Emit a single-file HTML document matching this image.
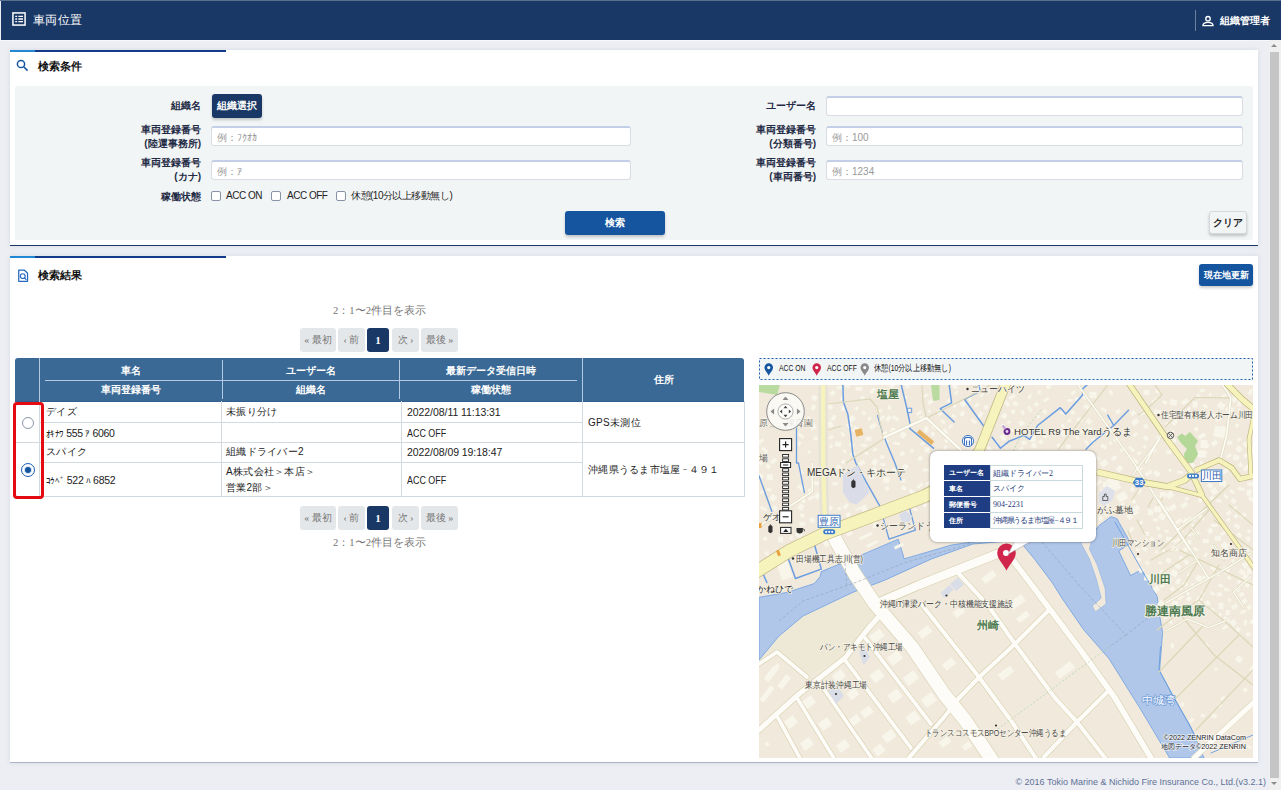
<!DOCTYPE html>
<html lang="ja">
<head>
<meta charset="utf-8">
<title>車両位置</title>
<style>
*{box-sizing:border-box;margin:0;padding:0}
html,body{width:1281px;height:790px;overflow:hidden}
body{background:#eceef3;font-family:"Liberation Sans",sans-serif;font-size:11px;color:#222;position:relative}
.abs{position:absolute}
#hdr{position:absolute;left:1px;top:1px;width:1280px;height:39px;background:#1a3865}
#hdrtop{position:absolute;left:0;top:0;width:1281px;height:1px;background:#5b6f8f}
#hdr .ttl{position:absolute;left:32px;top:11px;color:#fff;font-size:12px;letter-spacing:.35px;line-height:17px;white-space:nowrap}
#hdr .div{position:absolute;left:1194px;top:9px;width:1px;height:21px;background:#6e809c}
#hdr .usr{position:absolute;left:1219px;top:13px;color:#fff;font-size:10px;font-weight:bold;line-height:13px;white-space:nowrap}
.panel{position:absolute;left:10px;width:1248px;background:#fff;box-shadow:0 0 5px rgba(70,90,110,.13)}
.panel .tb1{position:absolute;left:0;top:0;width:25px;height:2px;background:#2288d4}
.panel .tb2{position:absolute;left:25px;top:0;width:191px;height:2px;background:#143a8a}
.ptitle{position:absolute;left:28px;font-size:11px;font-weight:bold;color:#111;line-height:14px;white-space:nowrap}
#p1{top:50px;height:196px;border-bottom:1px solid #1a3865}
#p2{top:256px;height:507px;border-bottom:1px solid #a9b6c8}
#gray{position:absolute;left:5px;top:36px;width:1238px;height:154px;background:#f2f5f5;border-radius:2px}
.lbl{position:absolute;font-size:10px;font-weight:bold;color:#1f2b45;text-align:right;line-height:14px;white-space:nowrap}
.inp{position:absolute;height:20px;background:#fff;border:1px solid #d9dde3;border-top:2px solid #c3cfe6;border-radius:3px;font-size:10px;color:#9a9a9a;line-height:20px;padding-left:5px;white-space:nowrap}
.btn{position:absolute;color:#fff;font-weight:bold;font-size:10px;text-align:center;border-radius:3px;box-shadow:0 2px 3px rgba(0,0,0,.2);white-space:nowrap}
.cb{position:absolute;width:10px;height:10px;border:1px solid #8a93a6;border-radius:2px;background:#fff}
.cbl{position:absolute;font-size:10px;color:#222;line-height:12px;white-space:nowrap;letter-spacing:-.5px}

.pg{position:absolute;height:24px;line-height:24px;background:#e4e7ea;border-radius:3px;color:#777;font-family:"Liberation Serif",serif;font-size:10px;text-align:center;white-space:nowrap}
.pg.on{background:#1a3865;color:#fff;font-weight:bold;font-size:11px}
.pinfo{position:absolute;left:5px;width:729px;text-align:center;font-family:"Liberation Serif",serif;font-size:10.6px;color:#777;line-height:12px;white-space:nowrap}
#th{position:absolute;left:5px;top:102px;width:729px;height:44px;background:#3a6995;border-bottom:1px solid #2f5f8e;border-radius:3px 3px 0 0}
#th div.t{position:absolute;color:#fff;font-weight:bold;font-size:10px;line-height:12px;text-align:center;white-space:nowrap}
#th i{position:absolute;background:#b4cae4;display:block}
#tb{position:absolute;left:5px;top:145px;width:730px;height:96px}
#tb i{position:absolute;background:#d3dadf;display:block}
#tb div{position:absolute;font-size:10px;letter-spacing:.3px;line-height:14px;color:#222;white-space:nowrap}
#tb div.k{letter-spacing:-.3px;font-size:10.5px}
#tb .hk{font-size:8.5px;letter-spacing:-.6px}
#tb div.a{letter-spacing:0;font-size:10.5px;transform:scaleX(.85);transform-origin:0 50%}
#tb div.d{letter-spacing:-.06px;font-size:10.5px}
#red{position:absolute;left:2.500px;top:145.500px;width:31px;height:97px;border:3px solid #e40a12;border-radius:4px}
.radio{position:absolute;width:12px;height:12px;border-radius:50%;border:1px solid #8d96a8;background:#fff}
#legend{position:absolute;left:749px;top:102px;width:494px;height:22px;background:#f2f5f5}
#legend span{position:absolute;top:5px;font-size:8.5px;line-height:10px;color:#111;white-space:nowrap;transform:scaleX(.8);transform-origin:0 0}
#map{position:absolute;left:749px;top:129px;width:494px;height:373px;background:#f0e9dc;overflow:hidden}
#foot{position:absolute;right:15px;top:776px;font-size:9px;line-height:12px;color:#5f7196;white-space:nowrap}
#strack{position:absolute;left:1269px;top:40px;width:12px;height:750px;background:#f0f0f0}
#sbar{position:absolute;left:1270px;top:52px;width:9px;height:726px;background:#c5c5c5}

#pop{position:absolute;left:171px;top:66px;width:166px;height:91px;background:#fff;border-radius:7px;box-shadow:0 0 3px rgba(0,0,0,.45)}
#pop .h{position:absolute;left:14px;width:46px;height:15px;background:#1e3d82;color:#fff;font-weight:bold;font-size:7.4px;line-height:15px;padding-left:5px;white-space:nowrap}
#pop .v{position:absolute;left:60px;width:93px;height:16px;border:1px solid #c9dadd;background:#fff;color:#1f3a7a;font-size:8px;line-height:15px;padding-left:2px;white-space:nowrap;font-family:"Liberation Serif",serif}
</style>
</head>
<body>
<div id="hdrtop"></div>
<div class="abs" style="left:0;top:40px;width:1269px;height:1px;background:#f7f8fb"></div>
<div id="hdr">
  <svg class="abs" style="left:11px;top:11px" width="14" height="14" viewBox="0 0 15 15"><rect x="1" y="1" width="13" height="13" fill="none" stroke="#fff" stroke-width="1.6"/><path d="M3.5 4.7h2M3.5 7.5h2M3.5 10.3h2M6.8 4.7h5M6.8 7.5h5M6.8 10.3h5" stroke="#fff" stroke-width="1.5"/></svg>
  <div class="ttl">車両位置</div>
  <div class="div"></div>
  <svg class="abs" style="left:1201px;top:14px" width="12" height="12" viewBox="0 0 12 12"><circle cx="6" cy="3.7" r="2.2" fill="none" stroke="#fff" stroke-width="1.4"/><path d="M1 10.6c0-2.2 2.6-3.2 5-3.2s5 1 5 3.2z" fill="none" stroke="#fff" stroke-width="1.4"/></svg>
  <div class="usr">組織管理者</div>
</div>

<!-- search condition panel -->
<div class="panel" id="p1">
  <div class="tb1"></div><div class="tb2"></div>
  <svg class="abs" style="left:6px;top:9px" width="13" height="13" viewBox="0 0 13 13"><circle cx="5" cy="5" r="3.6" fill="none" stroke="#1555a0" stroke-width="1.5"/><path d="M7.7 7.7L11.6 11.6" stroke="#1555a0" stroke-width="1.6"/></svg>
  <div class="ptitle" style="top:9px">検索条件</div>
  <div id="gray"></div>
  <div class="lbl" style="right:1057px;top:49px">組織名</div>
  <div class="btn" style="left:202px;top:44px;width:50px;height:24px;line-height:24px;background:#1a3865">組織選択</div>
  <div class="lbl" style="right:1057px;top:73px">車両登録番号<br>(陸運事務所)</div>
  <div class="inp" style="left:201px;top:76px;width:420px">例：ﾌｸｵｶ</div>
  <div class="lbl" style="right:1057px;top:106px">車両登録番号<br>(カナ)</div>
  <div class="inp" style="left:201px;top:110px;width:420px">例：ｱ</div>
  <div class="lbl" style="right:1057px;top:140px">稼働状態</div>
  <div class="cb" style="left:201px;top:141px"></div><div class="cbl" style="left:216px;top:140px">ACC ON</div>
  <div class="cb" style="left:261px;top:141px"></div><div class="cbl" style="left:277px;top:140px">ACC OFF</div>
  <div class="cb" style="left:326px;top:141px"></div><div class="cbl" style="left:341px;top:140px">休憩(10分以上移動無し)</div>
  <div class="lbl" style="right:442px;top:49px">ユーザー名</div>
  <div class="inp" style="left:816px;top:46px;width:417px"></div>
  <div class="lbl" style="right:442px;top:73px">車両登録番号<br>(分類番号)</div>
  <div class="inp" style="left:816px;top:76px;width:417px">例：100</div>
  <div class="lbl" style="right:442px;top:106px">車両登録番号<br>(車両番号)</div>
  <div class="inp" style="left:816px;top:110px;width:417px">例：1234</div>
  <div class="btn" style="left:555px;top:161px;width:100px;height:24px;line-height:24px;background:#1555a0">検索</div>
  <div class="btn" style="left:1199px;top:161px;width:38px;height:23px;line-height:21px;background:#f2f5f5;color:#222;border:1px solid #d5d9de">クリア</div>
</div>

<!-- search results panel -->
<div class="panel" id="p2">
  <div class="tb1"></div><div class="tb2"></div>
  <svg class="abs" style="left:7px;top:12.500px" width="11.500" height="13.500" viewBox="0 0 12 14"><path d="M1.800 1.200h6L11 4.400v8.400H1.800z" fill="none" stroke="#2468c0" stroke-width="1.300" stroke-linejoin="round"/><circle cx="6" cy="7.400" r="2.500" fill="none" stroke="#2468c0" stroke-width="1.200"/><path d="M7.800 9.300L9.800 11.300" stroke="#2468c0" stroke-width="1.200"/></svg>
  <div class="ptitle" style="top:12px">検索結果</div>
  <div class="btn" style="left:1189px;top:8px;width:54px;height:22px;line-height:22px;background:#1555a0;font-size:9px">現在地更新</div>

  <div class="pinfo" style="top:49px">2：1〜2件目を表示</div>
  <div class="pg" style="left:290px;top:72px;width:36px">« 最初</div>
  <div class="pg" style="left:328px;top:72px;width:27px">‹ 前</div>
  <div class="pg on" style="left:357px;top:72px;width:22px">1</div>
  <div class="pg" style="left:382px;top:72px;width:27px">次 ›</div>
  <div class="pg" style="left:411px;top:72px;width:37px">最後 »</div>

  <div id="th">
    <i style="left:24px;top:0;width:1px;height:43px"></i>
    <i style="left:207px;top:2px;width:1px;height:39px"></i>
    <i style="left:384px;top:2px;width:1px;height:39px"></i>
    <i style="left:567px;top:0;width:1px;height:43px"></i>
    <i style="left:30px;top:22px;width:532px;height:1px"></i>
    <div class="t" style="left:25px;top:7px;width:182px">車名</div>
    <div class="t" style="left:25px;top:26px;width:182px">車両登録番号</div>
    <div class="t" style="left:208px;top:7px;width:176px">ユーザー名</div>
    <div class="t" style="left:208px;top:26px;width:176px">組織名</div>
    <div class="t" style="left:385px;top:7px;width:182px">最新データ受信日時</div>
    <div class="t" style="left:385px;top:26px;width:182px">稼働状態</div>
    <div class="t" style="left:568px;top:16px;width:161px">住所</div>
  </div>
  <div id="tb">
    <i style="left:24px;top:0;width:1px;height:96px"></i>
    <i style="left:206px;top:0;width:1px;height:96px"></i>
    <i style="left:386px;top:0;width:1px;height:96px"></i>
    <i style="left:567px;top:0;width:1px;height:96px"></i>
    <i style="left:729px;top:0;width:1px;height:96px"></i>
    <i style="left:25px;top:21px;width:542px;height:1px"></i>
    <i style="left:0;top:41px;width:730px;height:1px"></i>
    <i style="left:25px;top:61px;width:542px;height:1px"></i>
    <i style="left:0;top:95px;width:730px;height:1px"></i>
    <div style="left:31px;top:4px">デイズ</div>
    <div class="k" style="left:31px;top:25px"><span class="hk">ｵｷﾅﾜ</span> 555 <span class="hk">ｱ</span> 6060</div>
    <div style="left:31px;top:44px">スパイク</div>
    <div class="k" style="left:31px;top:72px"><span class="hk">ｺｳﾍﾞ</span> 522 <span class="hk">ﾊ</span> 6852</div>
    <div style="left:211px;top:4px">未振り分け</div>
    <div style="left:211px;top:44px">組織ドライバー2</div>
    <div style="left:211px;top:63px;line-height:16px">A株式会社＞本店＞<br>営業2部＞</div>
    <div class="d" style="left:392px;top:4px">2022/08/11 11:13:31</div>
    <div class="a" style="left:392px;top:25px">ACC OFF</div>
    <div class="d" style="left:392px;top:44px">2022/08/09 19:18:47</div>
    <div class="a" style="left:392px;top:72px">ACC OFF</div>
    <div style="left:573px;top:15px">GPS未測位</div>
    <div style="left:573px;top:62px">沖縄県うるま市塩屋<span style="font-size:8px;letter-spacing:0;vertical-align:1px">－</span>４９１</div>
  </div>
  <div class="radio" style="left:12px;top:161px"></div>
  <div class="radio" style="left:11px;top:207px;width:14px;height:14px;border:1px solid #1e63b8;box-shadow:inset 0 0 0 2px #fff,inset 0 0 0 3px #cfe0f5;background:radial-gradient(circle,#1555a0 0 3px,#dfeafa 3.5px)"></div>
  <div id="red"></div>

  <div class="pg" style="left:290px;top:250px;width:36px">« 最初</div>
  <div class="pg" style="left:328px;top:250px;width:27px">‹ 前</div>
  <div class="pg on" style="left:357px;top:250px;width:22px">1</div>
  <div class="pg" style="left:382px;top:250px;width:27px">次 ›</div>
  <div class="pg" style="left:411px;top:250px;width:37px">最後 »</div>
  <div class="pinfo" style="top:281px">2：1〜2件目を表示</div>

  <div id="legend">
    <svg class="abs" style="left:0;top:0" width="494" height="22"><rect x=".5" y=".5" width="493" height="21" fill="none" stroke="#1f5db0" stroke-width="1" stroke-dasharray="2 2"/></svg>
    <svg class="abs" style="left:5px;top:4.500px" width="9.500" height="13.300" viewBox="0 0 10 14"><path d="M5 13.500C4 10.500 0.500 8 0.500 4.800A4.500 4.500 0 0 1 9.500 4.800C9.500 8 6 10.500 5 13.500Z" fill="#1555a0"/><circle cx="5" cy="4.800" r="1.700" fill="#fff"/></svg>
    <svg class="abs" style="left:53px;top:4.500px" width="9.500" height="13.300" viewBox="0 0 10 14"><path d="M5 13.500C4 10.500 0.500 8 0.500 4.800A4.500 4.500 0 0 1 9.500 4.800C9.500 8 6 10.500 5 13.500Z" fill="#d0264b"/><circle cx="5" cy="4.800" r="1.700" fill="#fff"/></svg>
    <svg class="abs" style="left:101px;top:4.500px" width="9.500" height="13.300" viewBox="0 0 10 14"><path d="M5 13.500C4 10.500 0.500 8 0.500 4.800A4.500 4.500 0 0 1 9.500 4.800C9.500 8 6 10.500 5 13.500Z" fill="#8a8a8a"/><circle cx="5" cy="4.800" r="1.700" fill="#fff"/></svg>
    <span style="left:20px">ACC ON</span>
    <span style="left:68px">ACC OFF</span>
    <span style="left:115px">休憩(10分以上移動無し)</span>
  </div>
  <div id="map">
<svg width="494" height="373" viewBox="0 0 494 373" style="position:absolute;left:0;top:0;font-family:'Liberation Sans',sans-serif">
<rect width="494" height="373" fill="#f0e9dc"/>
<!-- green / park -->
<path d="M0 0H21L18 10L0 7Z" fill="#b9dba0"/>
<path d="M172 0H180.5V15L174 16Z" fill="#b9dba0"/>
<path d="M418 52l5-3.5l3 2.5l5-4l8 9l-3 5l3 8l-5 9h-8l-1-9l3-5l-6-6Z" fill="#b4d898"/>
<path d="M0 275L20 251L44 231L80 215L98 207L112 215L118 228L108 245L84 272L48 292L18 267Z" fill="#eee9d7"/>
<!-- water -->
<path d="M0 212.3L28.6 207.3L55.3 198.5L61.2 191.5L62.2 186.6L79 179.7L92.8 175.7L98 171.9L139.2 154.2L143.8 168.8L145.1 173.9L192.2 160.1L211.9 157.2L266 150L337 144L340.2 140.5L352 131.7L357.9 133.6L371.6 158.2L359.8 166L371.6 190.5L382.4 184.7L392.2 201.3L398.1 211.2L401 232.7L403.6 247.4L400.6 285.9L414.8 312.2L431 340.5L445.1 373H410.7L380.4 322.3L350 273.7L324.5 244.5L302.9 213.1L293.1 197.4L275.4 173.9L265.6 162.1L262 155L213.9 159L172.6 173.9L125 195.5L94.1 207.2L44 231L20 251L0 275Z" fill="#b0c7e9" stroke="#6e9fe0" stroke-width="0.8"/>
<!-- sandbar -->
<path d="M321.5 157.2L330.4 173.9L337.2 193.5L342.2 213.1L333.3 221L336.3 226.9L347.1 219L346.1 203.3L338.2 179.8L330.4 164.1L332.3 157.2Z" fill="#f0e9dc" stroke="#8fb2e4" stroke-width="0.6"/>
<!-- light buildings -->
<g fill="#f8f5ea">
<rect x="113.5" y="244.5" width="9.0" height="13.0" transform="rotate(53 118.0 251.0)"/>
<rect x="131.0" y="266.5" width="10.0" height="13.0" transform="rotate(53 136.0 273.0)"/>
<rect x="147.0" y="286.5" width="10.0" height="13.0" transform="rotate(53 152.0 293.0)"/>
<rect x="165.0" y="308.5" width="10.0" height="13.0" transform="rotate(53 170.0 315.0)"/>
<rect x="113.0" y="285.0" width="10.0" height="12.0" transform="rotate(53 118.0 291.0)"/>
<rect x="131.0" y="305.0" width="10.0" height="12.0" transform="rotate(53 136.0 311.0)"/>
<rect x="149.0" y="327.0" width="10.0" height="12.0" transform="rotate(53 154.0 333.0)"/>
<rect x="75.5" y="285.5" width="9.0" height="11.0" transform="rotate(53 80.0 291.0)"/>
<rect x="90.0" y="304.0" width="8.0" height="10.0" transform="rotate(53 94.0 309.0)"/>
<rect x="104.0" y="321.5" width="8.0" height="11.0" transform="rotate(53 108.0 327.0)"/>
<rect x="92.0" y="330.0" width="8.0" height="10.0" transform="rotate(53 96.0 335.0)"/>
<rect x="125.5" y="345.0" width="9.0" height="12.0" transform="rotate(53 130.0 351.0)"/>
<rect x="115.5" y="360.0" width="9.0" height="10.0" transform="rotate(53 120.0 365.0)"/>
<rect x="45.5" y="311.5" width="9.0" height="11.0" transform="rotate(53 50.0 317.0)"/>
<rect x="61.5" y="333.5" width="9.0" height="11.0" transform="rotate(53 66.0 339.0)"/>
<rect x="79.5" y="355.5" width="9.0" height="11.0" transform="rotate(53 84.0 361.0)"/>
<rect x="27.5" y="331.5" width="9.0" height="11.0" transform="rotate(53 32.0 337.0)"/>
<rect x="43.5" y="353.5" width="9.0" height="11.0" transform="rotate(53 48.0 359.0)"/>
<rect x="6.0" y="357.0" width="4.0" height="4.0" transform="rotate(53 8.0 359.0)"/>
<rect x="162.0" y="240.5" width="8.0" height="13.0" transform="rotate(53 166.0 247.0)"/>
<rect x="186.0" y="273.0" width="8.0" height="12.0" transform="rotate(53 190.0 279.0)"/>
<rect x="196.5" y="221.5" width="7.0" height="11.0" transform="rotate(53 200.0 227.0)"/>
<rect x="242.5" y="283.0" width="7.0" height="12.0" transform="rotate(53 246.0 289.0)"/>
<rect x="182.5" y="351.5" width="7.0" height="11.0" transform="rotate(53 186.0 357.0)"/>
<rect x="205.0" y="356.5" width="6.0" height="9.0" transform="rotate(53 208.0 361.0)"/>
<rect x="226.5" y="185.0" width="7.0" height="14.0" transform="rotate(53 230.0 192.0)"/>
<rect x="254.0" y="209.0" width="8.0" height="16.0" transform="rotate(53 258.0 217.0)"/>
<rect x="261.0" y="225.5" width="6.0" height="13.0" transform="rotate(53 264.0 232.0)"/>
<rect x="243.5" y="280.5" width="7.0" height="15.0" transform="rotate(53 247.0 288.0)"/>
<rect x="302.0" y="275.5" width="8.0" height="19.0" transform="rotate(53 306.0 285.0)"/>
<rect x="9.0" y="281.0" width="6.0" height="16.0" transform="rotate(37 12.0 289.0)"/>
<rect x="22.0" y="289.5" width="6.0" height="15.0" transform="rotate(37 25.0 297.0)"/>
<rect x="5.5" y="300.0" width="5.0" height="18.0" transform="rotate(37 8.0 309.0)"/>
<rect x="15.0" y="279.0" width="4.0" height="8.0" transform="rotate(37 17.0 283.0)"/>
<rect x="20.2" y="177.1" width="11.0" height="17.0" transform="rotate(-18 25.7 185.6)"/>
<rect x="135.0" y="159.5" width="10.0" height="3.0" transform="rotate(-25 140.0 161.0)"/>
<rect x="100.0" y="149.5" width="14.0" height="3.0" transform="rotate(-25 107.0 151.0)"/>
<rect x="107.0" y="157.5" width="12.0" height="3.0" transform="rotate(-25 113.0 159.0)"/>
<rect x="96.0" y="122.0" width="12.0" height="2.0" transform="rotate(-22 102.0 123.0)"/>
<rect x="347.0" y="97.5" width="14.0" height="9.0" transform="rotate(-30 354.0 102.0)"/>
<rect x="358.0" y="108.0" width="10.0" height="8.0" transform="rotate(-30 363.0 112.0)"/>
<rect x="371.5" y="121.5" width="9.0" height="5.0" transform="rotate(-30 376.0 124.0)"/>
<rect x="455.0" y="41.5" width="12.0" height="11.0" transform="rotate(10 461.0 47.0)"/>
<rect x="441.5" y="55.0" width="7.0" height="8.0" transform="rotate(0 445.0 59.0)"/>
<rect x="439.0" y="65.5" width="8.0" height="7.0" transform="rotate(0 443.0 69.0)"/>
<rect x="348.0" y="93.0" width="8.0" height="6.0" transform="rotate(-30 352.0 96.0)"/>
<rect x="157.0" y="26.4" width="6.0" height="3.0" transform="rotate(-35 160.0 27.9)"/>
<rect x="403.2" y="15.9" width="5.0" height="3.0" transform="rotate(30 405.7 17.4)"/>
<rect x="69.3" y="19.3" width="4.0" height="5.0" transform="rotate(-30 71.3 21.8)"/>
<rect x="48.9" y="103.7" width="4.0" height="4.0" transform="rotate(-35 50.9 105.7)"/>
<rect x="269.1" y="9.1" width="3.0" height="5.0" transform="rotate(30 270.6 11.6)"/>
<rect x="119.2" y="31.8" width="7.0" height="3.0" transform="rotate(-35 122.7 33.3)"/>
<rect x="371.5" y="26.1" width="5.0" height="4.0" transform="rotate(-38 374.0 28.1)"/>
<rect x="472.7" y="11.9" width="5.0" height="5.0" transform="rotate(40 475.2 14.4)"/>
<rect x="165.5" y="62.3" width="5.0" height="5.0" transform="rotate(10 168.0 64.8)"/>
<rect x="149.9" y="104.9" width="6.0" height="4.0" transform="rotate(35 152.9 106.9)"/>
<rect x="241.9" y="38.9" width="4.0" height="3.0" transform="rotate(30 243.9 40.4)"/>
<rect x="242.8" y="28.3" width="5.0" height="5.0" transform="rotate(35 245.3 30.8)"/>
<rect x="72.6" y="29.6" width="4.0" height="6.0" transform="rotate(30 74.6 32.6)"/>
<rect x="4.0" y="151.8" width="4.0" height="4.0" transform="rotate(35 6.0 153.8)"/>
<rect x="0.0" y="75.0" width="4.0" height="5.0" transform="rotate(40 2.0 77.5)"/>
<rect x="330.5" y="7.0" width="7.0" height="6.0" transform="rotate(0 334.0 10.0)"/>
<rect x="215.2" y="18.8" width="5.0" height="3.0" transform="rotate(-35 217.7 20.3)"/>
<rect x="48.6" y="65.8" width="3.0" height="3.0" transform="rotate(30 50.1 67.3)"/>
<rect x="301.4" y="25.5" width="4.0" height="4.0" transform="rotate(40 303.4 27.5)"/>
<rect x="235.3" y="56.2" width="4.0" height="3.0" transform="rotate(40 237.3 57.7)"/>
<rect x="173.2" y="38.7" width="5.0" height="5.0" transform="rotate(40 175.7 41.2)"/>
<rect x="93.9" y="41.3" width="5.0" height="6.0" transform="rotate(30 96.4 44.3)"/>
<rect x="48.5" y="85.5" width="4.0" height="3.0" transform="rotate(10 50.5 87.0)"/>
<rect x="39.4" y="119.2" width="5.0" height="6.0" transform="rotate(30 41.9 122.2)"/>
<rect x="82.0" y="21.0" width="4.0" height="5.0" transform="rotate(10 84.0 23.5)"/>
<rect x="394.9" y="24.5" width="7.0" height="5.0" transform="rotate(10 398.4 27.0)"/>
<rect x="269.5" y="21.2" width="3.0" height="6.0" transform="rotate(-35 271.0 24.2)"/>
<rect x="406.1" y="37.5" width="4.0" height="3.0" transform="rotate(35 408.1 39.0)"/>
<rect x="157.5" y="99.2" width="7.0" height="3.0" transform="rotate(-38 161.0 100.7)"/>
<rect x="7.2" y="78.9" width="4.0" height="5.0" transform="rotate(-38 9.2 81.4)"/>
<rect x="381.4" y="25.7" width="4.0" height="4.0" transform="rotate(-35 383.4 27.7)"/>
<rect x="272.4" y="57.8" width="5.0" height="5.0" transform="rotate(10 274.9 60.3)"/>
<rect x="274.8" y="44.5" width="4.0" height="3.0" transform="rotate(-35 276.8 46.0)"/>
<rect x="126.2" y="101.5" width="4.0" height="4.0" transform="rotate(-30 128.2 103.5)"/>
<rect x="153.6" y="122.7" width="5.0" height="3.0" transform="rotate(30 156.1 124.2)"/>
<rect x="440.1" y="25.6" width="6.0" height="6.0" transform="rotate(40 443.1 28.6)"/>
<rect x="476.5" y="38.6" width="3.0" height="4.0" transform="rotate(10 478.0 40.6)"/>
<rect x="78.4" y="122.0" width="4.0" height="3.0" transform="rotate(0 80.4 123.5)"/>
<rect x="164.0" y="83.4" width="6.0" height="3.0" transform="rotate(0 167.0 84.9)"/>
<rect x="249.6" y="10.4" width="7.0" height="3.0" transform="rotate(-35 253.1 11.9)"/>
<rect x="38.0" y="48.8" width="7.0" height="3.0" transform="rotate(35 41.5 50.3)"/>
<rect x="242.3" y="59.0" width="4.0" height="3.0" transform="rotate(-30 244.3 60.5)"/>
<rect x="208.6" y="10.4" width="3.0" height="6.0" transform="rotate(-35 210.1 13.4)"/>
<rect x="392.5" y="14.0" width="7.0" height="3.0" transform="rotate(-35 396.0 15.5)"/>
<rect x="129.1" y="20.5" width="3.0" height="4.0" transform="rotate(0 130.6 22.5)"/>
<rect x="455.8" y="48.1" width="4.0" height="3.0" transform="rotate(30 457.8 49.6)"/>
<rect x="127.4" y="30.5" width="4.0" height="6.0" transform="rotate(35 129.4 33.5)"/>
<rect x="259.9" y="35.6" width="5.0" height="5.0" transform="rotate(-30 262.4 38.1)"/>
<rect x="489.8" y="3.8" width="3.0" height="6.0" transform="rotate(30 491.3 6.8)"/>
<rect x="251.5" y="44.0" width="5.0" height="3.0" transform="rotate(0 254.0 45.5)"/>
<rect x="150.0" y="37.8" width="4.0" height="4.0" transform="rotate(30 152.0 39.8)"/>
<rect x="364.0" y="45.8" width="4.0" height="3.0" transform="rotate(-35 366.0 47.3)"/>
<rect x="130.9" y="-1.3" width="4.0" height="4.0" transform="rotate(40 132.9 0.7)"/>
<rect x="151.4" y="64.0" width="3.0" height="4.0" transform="rotate(0 152.9 66.0)"/>
<rect x="320.6" y="44.4" width="7.0" height="3.0" transform="rotate(-35 324.1 45.9)"/>
<rect x="195.9" y="5.7" width="3.0" height="4.0" transform="rotate(35 197.4 7.7)"/>
<rect x="308.6" y="14.1" width="5.0" height="3.0" transform="rotate(0 311.1 15.6)"/>
<rect x="241.6" y="49.6" width="5.0" height="6.0" transform="rotate(-30 244.1 52.6)"/>
<rect x="19.1" y="151.5" width="5.0" height="6.0" transform="rotate(0 21.6 154.5)"/>
<rect x="111.6" y="2.8" width="4.0" height="6.0" transform="rotate(40 113.6 5.8)"/>
<rect x="221.5" y="6.4" width="3.0" height="6.0" transform="rotate(30 223.0 9.4)"/>
<rect x="322.7" y="10.2" width="6.0" height="4.0" transform="rotate(35 325.7 12.2)"/>
<rect x="114.0" y="136.9" width="4.0" height="6.0" transform="rotate(10 116.0 139.9)"/>
<rect x="315.5" y="12.3" width="4.0" height="4.0" transform="rotate(35 317.5 14.3)"/>
<rect x="478.4" y="15.4" width="4.0" height="6.0" transform="rotate(10 480.4 18.4)"/>
<rect x="141.2" y="93.6" width="5.0" height="4.0" transform="rotate(10 143.7 95.6)"/>
<rect x="40.4" y="85.5" width="4.0" height="4.0" transform="rotate(-35 42.4 87.5)"/>
<rect x="467.2" y="21.5" width="7.0" height="6.0" transform="rotate(35 470.7 24.5)"/>
<rect x="-0.7" y="89.0" width="5.0" height="4.0" transform="rotate(35 1.8 91.0)"/>
<rect x="183.8" y="20.9" width="4.0" height="3.0" transform="rotate(40 185.8 22.4)"/>
<rect x="140.7" y="66.9" width="5.0" height="4.0" transform="rotate(-35 143.2 68.9)"/>
<rect x="134.4" y="7.4" width="3.0" height="3.0" transform="rotate(35 135.9 8.9)"/>
<rect x="311.7" y="25.5" width="4.0" height="4.0" transform="rotate(40 313.7 27.5)"/>
<rect x="91.3" y="67.6" width="5.0" height="3.0" transform="rotate(0 93.8 69.1)"/>
<rect x="316.9" y="50.4" width="3.0" height="5.0" transform="rotate(-30 318.4 52.9)"/>
<rect x="82.4" y="74.8" width="4.0" height="4.0" transform="rotate(35 84.4 76.8)"/>
<rect x="192.8" y="29.5" width="4.0" height="3.0" transform="rotate(30 194.8 31.0)"/>
<rect x="96.4" y="1.7" width="7.0" height="4.0" transform="rotate(0 99.9 3.7)"/>
<rect x="184.7" y="60.6" width="3.0" height="4.0" transform="rotate(35 186.2 62.6)"/>
<rect x="335.8" y="96.4" width="7.0" height="3.0" transform="rotate(-35 339.3 97.9)"/>
<rect x="131.4" y="43.0" width="5.0" height="6.0" transform="rotate(10 133.9 46.0)"/>
<rect x="384.9" y="38.9" width="4.0" height="5.0" transform="rotate(-35 386.9 41.4)"/>
<rect x="52.9" y="10.5" width="5.0" height="5.0" transform="rotate(30 55.4 13.0)"/>
<rect x="189.2" y="39.9" width="5.0" height="3.0" transform="rotate(-38 191.7 41.4)"/>
<rect x="134.1" y="57.0" width="7.0" height="3.0" transform="rotate(10 137.6 58.5)"/>
<rect x="11.5" y="74.2" width="6.0" height="4.0" transform="rotate(-38 14.5 76.2)"/>
<rect x="7.8" y="89.2" width="6.0" height="6.0" transform="rotate(0 10.8 92.2)"/>
<rect x="193.8" y="-1.8" width="4.0" height="6.0" transform="rotate(-35 195.8 1.2)"/>
<rect x="110.5" y="39.0" width="7.0" height="4.0" transform="rotate(-35 114.0 41.0)"/>
<rect x="479.7" y="23.3" width="3.0" height="6.0" transform="rotate(-38 481.2 26.3)"/>
<rect x="350.2" y="56.6" width="3.0" height="3.0" transform="rotate(-30 351.7 58.1)"/>
<rect x="160.1" y="31.3" width="5.0" height="6.0" transform="rotate(10 162.6 34.3)"/>
<rect x="13.3" y="120.9" width="5.0" height="4.0" transform="rotate(40 15.8 122.9)"/>
<rect x="41.4" y="128.5" width="4.0" height="4.0" transform="rotate(10 43.4 130.5)"/>
<rect x="440.6" y="4.1" width="5.0" height="3.0" transform="rotate(0 443.1 5.6)"/>
<rect x="301.8" y="45.5" width="6.0" height="6.0" transform="rotate(40 304.8 48.5)"/>
<rect x="30.8" y="150.8" width="3.0" height="4.0" transform="rotate(10 32.3 152.8)"/>
<rect x="121.5" y="78.0" width="5.0" height="3.0" transform="rotate(10 124.0 79.5)"/>
<rect x="87.4" y="146.5" width="6.0" height="4.0" transform="rotate(-30 90.4 148.5)"/>
<rect x="298.0" y="58.6" width="4.0" height="4.0" transform="rotate(40 300.0 60.6)"/>
<rect x="99.9" y="75.9" width="6.0" height="4.0" transform="rotate(-30 102.9 77.9)"/>
<rect x="113.2" y="74.1" width="5.0" height="6.0" transform="rotate(30 115.7 77.1)"/>
<rect x="324.7" y="20.4" width="7.0" height="4.0" transform="rotate(35 328.2 22.4)"/>
<rect x="123.0" y="46.7" width="5.0" height="3.0" transform="rotate(-30 125.5 48.2)"/>
<rect x="159.2" y="70.8" width="4.0" height="5.0" transform="rotate(30 161.2 73.3)"/>
<rect x="227.7" y="4.8" width="3.0" height="4.0" transform="rotate(30 229.2 6.8)"/>
<rect x="105.5" y="66.7" width="4.0" height="3.0" transform="rotate(30 107.5 68.2)"/>
<rect x="73.3" y="97.3" width="6.0" height="3.0" transform="rotate(0 76.3 98.8)"/>
<rect x="468.4" y="55.8" width="5.0" height="4.0" transform="rotate(0 470.9 57.8)"/>
<rect x="77.8" y="1.2" width="5.0" height="3.0" transform="rotate(0 80.3 2.7)"/>
<rect x="42.0" y="112.1" width="4.0" height="6.0" transform="rotate(-30 44.0 115.1)"/>
<rect x="69.6" y="50.9" width="5.0" height="3.0" transform="rotate(-35 72.1 52.4)"/>
<rect x="96.0" y="21.4" width="3.0" height="4.0" transform="rotate(40 97.5 23.4)"/>
<rect x="87.9" y="37.9" width="5.0" height="5.0" transform="rotate(-30 90.4 40.4)"/>
<rect x="55.7" y="107.9" width="5.0" height="6.0" transform="rotate(35 58.2 110.9)"/>
<rect x="121.1" y="70.0" width="4.0" height="4.0" transform="rotate(10 123.1 72.0)"/>
<rect x="85.8" y="-1.4" width="5.0" height="4.0" transform="rotate(30 88.3 0.6)"/>
<rect x="452.5" y="55.5" width="6.0" height="5.0" transform="rotate(-35 455.5 58.0)"/>
<rect x="64.8" y="155.6" width="5.0" height="6.0" transform="rotate(-35 67.3 158.6)"/>
<rect x="449.0" y="27.5" width="7.0" height="6.0" transform="rotate(30 452.5 30.5)"/>
<rect x="439.4" y="48.9" width="7.0" height="4.0" transform="rotate(-30 442.9 50.9)"/>
<rect x="181.4" y="35.3" width="5.0" height="3.0" transform="rotate(35 183.9 36.8)"/>
<rect x="53.8" y="96.2" width="6.0" height="4.0" transform="rotate(10 56.8 98.2)"/>
<rect x="433.5" y="16.4" width="5.0" height="6.0" transform="rotate(0 436.0 19.4)"/>
<rect x="70.7" y="59.2" width="3.0" height="4.0" transform="rotate(30 72.2 61.2)"/>
<rect x="326.4" y="54.8" width="3.0" height="6.0" transform="rotate(-38 327.9 57.8)"/>
<rect x="106.5" y="51.8" width="6.0" height="4.0" transform="rotate(0 109.5 53.8)"/>
<rect x="321.1" y="1.6" width="3.0" height="5.0" transform="rotate(40 322.6 4.1)"/>
<rect x="146.8" y="22.2" width="4.0" height="5.0" transform="rotate(10 148.8 24.7)"/>
<rect x="69.5" y="121.1" width="4.0" height="4.0" transform="rotate(35 71.5 123.1)"/>
<rect x="48.8" y="111.8" width="6.0" height="3.0" transform="rotate(-30 51.8 113.3)"/>
<rect x="478.1" y="53.2" width="4.0" height="3.0" transform="rotate(-38 480.1 54.7)"/>
<rect x="413.8" y="34.5" width="4.0" height="6.0" transform="rotate(40 415.8 37.5)"/>
<rect x="260.6" y="-0.8" width="3.0" height="4.0" transform="rotate(30 262.1 1.2)"/>
<rect x="279.7" y="54.9" width="4.0" height="4.0" transform="rotate(-35 281.7 56.9)"/>
<rect x="277.7" y="30.2" width="3.0" height="3.0" transform="rotate(-35 279.2 31.7)"/>
<rect x="168.9" y="24.7" width="3.0" height="3.0" transform="rotate(-38 170.4 26.2)"/>
<rect x="372.8" y="34.4" width="7.0" height="5.0" transform="rotate(-35 376.3 36.9)"/>
<rect x="40.2" y="137.0" width="6.0" height="4.0" transform="rotate(10 43.2 139.0)"/>
<rect x="422.4" y="14.8" width="7.0" height="4.0" transform="rotate(-30 425.9 16.8)"/>
<rect x="461.5" y="41.3" width="4.0" height="3.0" transform="rotate(-35 463.5 42.8)"/>
<rect x="275.3" y="17.3" width="4.0" height="4.0" transform="rotate(-35 277.3 19.3)"/>
<rect x="99.3" y="46.2" width="5.0" height="5.0" transform="rotate(-30 101.8 48.7)"/>
<rect x="112.9" y="82.8" width="5.0" height="5.0" transform="rotate(-38 115.4 85.3)"/>
<rect x="435.3" y="42.0" width="4.0" height="4.0" transform="rotate(35 437.3 44.0)"/>
<rect x="488.5" y="29.0" width="6.0" height="3.0" transform="rotate(30 491.5 30.5)"/>
<rect x="211.9" y="34.8" width="6.0" height="3.0" transform="rotate(35 214.9 36.3)"/>
<rect x="456.5" y="31.9" width="6.0" height="4.0" transform="rotate(-38 459.5 33.9)"/>
<rect x="254.0" y="16.7" width="5.0" height="4.0" transform="rotate(30 256.5 18.7)"/>
<rect x="334.6" y="71.1" width="7.0" height="3.0" transform="rotate(40 338.1 72.6)"/>
<rect x="312.5" y="44.7" width="5.0" height="4.0" transform="rotate(-38 315.0 46.7)"/>
<rect x="171.9" y="47.1" width="4.0" height="4.0" transform="rotate(0 173.9 49.1)"/>
<rect x="183.3" y="43.9" width="5.0" height="6.0" transform="rotate(-30 185.8 46.9)"/>
<rect x="187.7" y="13.8" width="5.0" height="4.0" transform="rotate(-30 190.2 15.8)"/>
<rect x="259.6" y="62.4" width="5.0" height="3.0" transform="rotate(-38 262.1 63.9)"/>
<rect x="101.6" y="11.3" width="4.0" height="4.0" transform="rotate(-35 103.6 13.3)"/>
<rect x="76.2" y="56.8" width="6.0" height="5.0" transform="rotate(10 79.2 59.3)"/>
<rect x="11.1" y="109.8" width="6.0" height="6.0" transform="rotate(40 14.1 112.8)"/>
<rect x="68.9" y="36.5" width="5.0" height="6.0" transform="rotate(-30 71.4 39.5)"/>
<rect x="161.5" y="57.2" width="4.0" height="3.0" transform="rotate(-35 163.5 58.7)"/>
<rect x="384.4" y="4.9" width="6.0" height="5.0" transform="rotate(0 387.4 7.4)"/>
<rect x="146.4" y="-0.9" width="4.0" height="4.0" transform="rotate(-38 148.4 1.1)"/>
<rect x="102.5" y="120.4" width="5.0" height="6.0" transform="rotate(-30 105.0 123.4)"/>
<rect x="48.6" y="31.5" width="3.0" height="4.0" transform="rotate(-35 50.1 33.5)"/>
<rect x="125.0" y="54.4" width="5.0" height="3.0" transform="rotate(40 127.5 55.9)"/>
<rect x="7.6" y="103.3" width="5.0" height="3.0" transform="rotate(10 10.1 104.8)"/>
<rect x="278.8" y="5.3" width="3.0" height="4.0" transform="rotate(0 280.3 7.3)"/>
<rect x="218.1" y="0.1" width="5.0" height="5.0" transform="rotate(-30 220.6 2.6)"/>
<rect x="103.4" y="26.1" width="3.0" height="4.0" transform="rotate(-38 104.9 28.1)"/>
<rect x="1.1" y="122.3" width="7.0" height="3.0" transform="rotate(30 4.6 123.8)"/>
<rect x="428.1" y="21.9" width="3.0" height="4.0" transform="rotate(30 429.6 23.9)"/>
<rect x="142.3" y="101.1" width="5.0" height="4.0" transform="rotate(35 144.8 103.1)"/>
<rect x="449.8" y="8.2" width="3.0" height="3.0" transform="rotate(-38 451.3 9.7)"/>
<rect x="397.4" y="50.4" width="3.0" height="4.0" transform="rotate(35 398.9 52.4)"/>
<rect x="384.8" y="50.9" width="4.0" height="5.0" transform="rotate(-30 386.8 53.4)"/>
<rect x="38.5" y="100.4" width="7.0" height="4.0" transform="rotate(30 42.0 102.4)"/>
<rect x="287.2" y="-0.3" width="5.0" height="4.0" transform="rotate(-35 289.7 1.7)"/>
<rect x="248.0" y="35.8" width="4.0" height="3.0" transform="rotate(-35 250.0 37.3)"/>
<rect x="87.3" y="127.2" width="4.0" height="5.0" transform="rotate(40 89.3 129.7)"/>
<rect x="71.1" y="6.2" width="5.0" height="4.0" transform="rotate(-35 73.6 8.2)"/>
<rect x="38.9" y="56.4" width="3.0" height="4.0" transform="rotate(35 40.4 58.4)"/>
<rect x="123.5" y="5.5" width="4.0" height="3.0" transform="rotate(0 125.5 7.0)"/>
<rect x="219.5" y="26.5" width="4.0" height="6.0" transform="rotate(30 221.5 29.5)"/>
<rect x="462.4" y="9.5" width="5.0" height="3.0" transform="rotate(-38 464.9 11.0)"/>
<rect x="124.4" y="92.0" width="6.0" height="6.0" transform="rotate(10 127.4 95.0)"/>
<rect x="331.9" y="53.3" width="5.0" height="4.0" transform="rotate(-35 334.4 55.3)"/>
<rect x="76.0" y="151.6" width="3.0" height="5.0" transform="rotate(40 77.5 154.1)"/>
<rect x="201.4" y="26.3" width="4.0" height="5.0" transform="rotate(35 203.4 28.8)"/>
<rect x="443.7" y="19.6" width="5.0" height="3.0" transform="rotate(30 446.2 21.1)"/>
<rect x="133.3" y="31.9" width="7.0" height="3.0" transform="rotate(30 136.8 33.4)"/>
<rect x="350.0" y="34.9" width="3.0" height="3.0" transform="rotate(10 351.5 36.4)"/>
<rect x="308.5" y="34.1" width="4.0" height="3.0" transform="rotate(-38 310.5 35.6)"/>
<rect x="5.1" y="166.9" width="5.0" height="3.0" transform="rotate(35 7.6 168.4)"/>
<rect x="50.7" y="132.7" width="5.0" height="5.0" transform="rotate(-38 53.2 135.2)"/>
<rect x="109.0" y="31.7" width="3.0" height="4.0" transform="rotate(35 110.5 33.7)"/>
<rect x="132.4" y="83.5" width="5.0" height="5.0" transform="rotate(35 134.9 86.0)"/>
<rect x="52.4" y="20.0" width="4.0" height="5.0" transform="rotate(30 54.4 22.5)"/>
<rect x="165.2" y="41.5" width="4.0" height="6.0" transform="rotate(0 167.2 44.5)"/>
<rect x="484.5" y="56.8" width="5.0" height="5.0" transform="rotate(-38 487.0 59.3)"/>
<rect x="90.6" y="57.5" width="4.0" height="5.0" transform="rotate(-38 92.6 60.0)"/>
<rect x="396.8" y="4.6" width="3.0" height="4.0" transform="rotate(-35 398.3 6.6)"/>
<rect x="262.2" y="25.0" width="3.0" height="5.0" transform="rotate(-30 263.7 27.5)"/>
<rect x="282.2" y="49.2" width="6.0" height="3.0" transform="rotate(35 285.2 50.7)"/>
<rect x="2.4" y="63.7" width="7.0" height="3.0" transform="rotate(40 5.9 65.2)"/>
<rect x="51.0" y="38.7" width="6.0" height="6.0" transform="rotate(-30 54.0 41.7)"/>
<rect x="410.9" y="14.6" width="7.0" height="6.0" transform="rotate(10 414.4 17.6)"/>
<rect x="201.5" y="16.6" width="5.0" height="5.0" transform="rotate(-35 204.0 19.1)"/>
<rect x="354.7" y="51.7" width="5.0" height="5.0" transform="rotate(0 357.2 54.2)"/>
<rect x="185.6" y="53.5" width="5.0" height="4.0" transform="rotate(-30 188.1 55.5)"/>
<rect x="262.5" y="55.8" width="5.0" height="4.0" transform="rotate(0 265.0 57.8)"/>
<rect x="166.1" y="96.6" width="7.0" height="3.0" transform="rotate(-30 169.6 98.1)"/>
<rect x="84.7" y="118.3" width="4.0" height="6.0" transform="rotate(40 86.7 121.3)"/>
<rect x="89.9" y="31.2" width="6.0" height="5.0" transform="rotate(-35 92.9 33.7)"/>
<rect x="311.9" y="6.3" width="5.0" height="3.0" transform="rotate(-38 314.4 7.8)"/>
<rect x="-1.6" y="54.8" width="7.0" height="3.0" transform="rotate(-38 1.9 56.3)"/>
<rect x="327.5" y="33.9" width="5.0" height="5.0" transform="rotate(35 330.0 36.4)"/>
<rect x="252.1" y="24.6" width="4.0" height="4.0" transform="rotate(-35 254.1 26.6)"/>
<rect x="283.9" y="24.6" width="4.0" height="4.0" transform="rotate(35 285.9 26.6)"/>
<rect x="82.2" y="46.8" width="3.0" height="5.0" transform="rotate(-35 83.7 49.3)"/>
<rect x="83.7" y="64.8" width="4.0" height="3.0" transform="rotate(35 85.7 66.3)"/>
<rect x="164.4" y="118.5" width="3.0" height="4.0" transform="rotate(40 165.9 120.5)"/>
<rect x="228.2" y="62.2" width="5.0" height="3.0" transform="rotate(35 230.7 63.7)"/>
<rect x="346.5" y="45.7" width="5.0" height="5.0" transform="rotate(40 349.0 48.2)"/>
<rect x="12.2" y="130.9" width="4.0" height="4.0" transform="rotate(-38 14.2 132.9)"/>
<rect x="144.7" y="10.7" width="4.0" height="3.0" transform="rotate(30 146.7 12.2)"/>
<rect x="141.5" y="47.1" width="5.0" height="6.0" transform="rotate(30 144.0 50.1)"/>
<rect x="350.5" y="5.0" width="3.0" height="5.0" transform="rotate(-30 352.0 7.5)"/>
<rect x="110.0" y="90.1" width="5.0" height="4.0" transform="rotate(0 112.5 92.1)"/>
<rect x="458.7" y="17.7" width="7.0" height="6.0" transform="rotate(35 462.2 20.7)"/>
<rect x="301.5" y="39.3" width="5.0" height="3.0" transform="rotate(40 304.0 40.8)"/>
<rect x="267.2" y="44.7" width="3.0" height="3.0" transform="rotate(40 268.7 46.2)"/>
<rect x="168.5" y="15.1" width="6.0" height="4.0" transform="rotate(-30 171.5 17.1)"/>
<rect x="329.1" y="42.5" width="4.0" height="3.0" transform="rotate(10 331.1 44.0)"/>
<rect x="341.8" y="23.2" width="6.0" height="3.0" transform="rotate(30 344.8 24.7)"/>
<rect x="54.6" y="51.5" width="4.0" height="4.0" transform="rotate(30 56.6 53.5)"/>
<rect x="77.2" y="80.3" width="5.0" height="4.0" transform="rotate(35 79.7 82.3)"/>
<rect x="81.5" y="11.3" width="3.0" height="4.0" transform="rotate(10 83.0 13.3)"/>
<rect x="120.0" y="24.2" width="3.0" height="3.0" transform="rotate(0 121.5 25.7)"/>
<rect x="412.8" y="51.8" width="4.0" height="6.0" transform="rotate(-30 414.8 54.8)"/>
<rect x="412.4" y="45.4" width="3.0" height="3.0" transform="rotate(-35 413.9 46.9)"/>
<rect x="284.1" y="13.3" width="6.0" height="3.0" transform="rotate(-30 287.1 14.8)"/>
<rect x="438.5" y="8.6" width="3.0" height="6.0" transform="rotate(-30 440.0 11.6)"/>
<rect x="143.6" y="79.0" width="5.0" height="6.0" transform="rotate(40 146.1 82.0)"/>
<rect x="37.2" y="146.8" width="6.0" height="6.0" transform="rotate(40 40.2 149.8)"/>
<rect x="193.8" y="19.6" width="4.0" height="3.0" transform="rotate(-35 195.8 21.1)"/>
<rect x="317.9" y="32.7" width="6.0" height="4.0" transform="rotate(10 320.9 34.7)"/>
<rect x="225.1" y="20.3" width="4.0" height="4.0" transform="rotate(-35 227.1 22.3)"/>
<rect x="427.2" y="29.1" width="6.0" height="4.0" transform="rotate(-38 430.2 31.1)"/>
<rect x="270.8" y="50.7" width="6.0" height="6.0" transform="rotate(0 273.8 53.7)"/>
<rect x="373.7" y="48.2" width="5.0" height="3.0" transform="rotate(-38 376.2 49.7)"/>
<rect x="1.0" y="105.6" width="4.0" height="3.0" transform="rotate(-38 3.0 107.1)"/>
<rect x="356.6" y="24.6" width="5.0" height="4.0" transform="rotate(-35 359.1 26.6)"/>
<rect x="114.0" y="63.1" width="4.0" height="3.0" transform="rotate(-38 116.0 64.6)"/>
<rect x="353.1" y="44.1" width="5.0" height="5.0" transform="rotate(40 355.6 46.6)"/>
<rect x="245.9" y="15.4" width="4.0" height="6.0" transform="rotate(-38 247.9 18.4)"/>
<rect x="101.8" y="58.9" width="6.0" height="3.0" transform="rotate(10 104.8 60.4)"/>
<rect x="164.4" y="9.1" width="5.0" height="3.0" transform="rotate(-35 166.9 10.6)"/>
<rect x="306.9" y="59.4" width="5.0" height="5.0" transform="rotate(0 309.4 61.9)"/>
<rect x="125.5" y="84.2" width="3.0" height="3.0" transform="rotate(40 127.0 85.7)"/>
<rect x="178.6" y="24.6" width="4.0" height="6.0" transform="rotate(-30 180.6 27.6)"/>
<rect x="418.4" y="85.9" width="6.0" height="3.0" transform="rotate(10 421.4 87.4)"/>
<rect x="488.3" y="96.9" width="6.0" height="4.0" transform="rotate(0 491.3 98.9)"/>
<rect x="409.4" y="83.8" width="3.0" height="3.0" transform="rotate(-38 410.9 85.3)"/>
<rect x="347.6" y="107.3" width="5.0" height="6.0" transform="rotate(40 350.1 110.3)"/>
<rect x="400.1" y="128.7" width="6.0" height="6.0" transform="rotate(30 403.1 131.7)"/>
<rect x="341.7" y="59.6" width="6.0" height="4.0" transform="rotate(30 344.7 61.6)"/>
<rect x="372.1" y="73.9" width="7.0" height="4.0" transform="rotate(35 375.6 75.9)"/>
<rect x="371.4" y="102.4" width="4.0" height="4.0" transform="rotate(35 373.4 104.4)"/>
<rect x="485.0" y="68.6" width="4.0" height="4.0" transform="rotate(-35 487.0 70.6)"/>
<rect x="474.2" y="70.1" width="6.0" height="5.0" transform="rotate(10 477.2 72.6)"/>
<rect x="369.2" y="62.6" width="7.0" height="3.0" transform="rotate(40 372.7 64.1)"/>
<rect x="344.6" y="118.9" width="5.0" height="3.0" transform="rotate(0 347.1 120.4)"/>
<rect x="384.3" y="60.4" width="3.0" height="3.0" transform="rotate(-38 385.8 61.9)"/>
<rect x="358.0" y="80.6" width="5.0" height="6.0" transform="rotate(40 360.5 83.6)"/>
<rect x="352.0" y="71.2" width="6.0" height="4.0" transform="rotate(-35 355.0 73.2)"/>
<rect x="400.8" y="107.1" width="6.0" height="6.0" transform="rotate(0 403.8 110.1)"/>
<rect x="341.6" y="75.3" width="7.0" height="6.0" transform="rotate(-38 345.1 78.3)"/>
<rect x="343.8" y="96.9" width="4.0" height="5.0" transform="rotate(0 345.8 99.4)"/>
<rect x="345.9" y="128.2" width="3.0" height="3.0" transform="rotate(-35 347.4 129.7)"/>
<rect x="467.8" y="132.7" width="3.0" height="4.0" transform="rotate(30 469.3 134.7)"/>
<rect x="446.4" y="59.7" width="4.0" height="3.0" transform="rotate(-38 448.4 61.2)"/>
<rect x="379.7" y="82.4" width="3.0" height="6.0" transform="rotate(10 381.2 85.4)"/>
<rect x="472.1" y="114.0" width="5.0" height="4.0" transform="rotate(40 474.6 116.0)"/>
<rect x="360.8" y="117.9" width="5.0" height="3.0" transform="rotate(-38 363.3 119.4)"/>
<rect x="489.3" y="112.1" width="6.0" height="4.0" transform="rotate(30 492.3 114.1)"/>
<rect x="465.6" y="109.2" width="3.0" height="5.0" transform="rotate(-38 467.1 111.7)"/>
<rect x="476.9" y="61.4" width="6.0" height="5.0" transform="rotate(40 479.9 63.9)"/>
<rect x="395.0" y="121.3" width="7.0" height="6.0" transform="rotate(0 398.5 124.3)"/>
<rect x="392.2" y="63.0" width="5.0" height="4.0" transform="rotate(40 394.7 65.0)"/>
<rect x="438.8" y="130.1" width="7.0" height="4.0" transform="rotate(35 442.3 132.1)"/>
<rect x="448.6" y="98.2" width="5.0" height="5.0" transform="rotate(30 451.1 100.7)"/>
<rect x="490.4" y="62.6" width="7.0" height="5.0" transform="rotate(40 493.9 65.1)"/>
<rect x="407.4" y="107.0" width="7.0" height="6.0" transform="rotate(-38 410.9 110.0)"/>
<rect x="386.1" y="86.2" width="7.0" height="4.0" transform="rotate(-35 389.6 88.2)"/>
<rect x="394.8" y="86.0" width="6.0" height="5.0" transform="rotate(35 397.8 88.5)"/>
<rect x="407.2" y="64.9" width="5.0" height="4.0" transform="rotate(10 409.7 66.9)"/>
<rect x="410.2" y="119.8" width="7.0" height="5.0" transform="rotate(-30 413.7 122.3)"/>
<rect x="378.0" y="103.1" width="4.0" height="6.0" transform="rotate(35 380.0 106.1)"/>
<rect x="479.2" y="77.9" width="4.0" height="4.0" transform="rotate(-35 481.2 79.9)"/>
<rect x="484.1" y="80.7" width="7.0" height="4.0" transform="rotate(-38 487.6 82.7)"/>
<rect x="431.5" y="78.0" width="4.0" height="4.0" transform="rotate(-30 433.5 80.0)"/>
<rect x="395.3" y="110.4" width="4.0" height="3.0" transform="rotate(-35 397.3 111.9)"/>
<rect x="341.4" y="104.2" width="5.0" height="4.0" transform="rotate(0 343.9 106.2)"/>
<rect x="421.8" y="118.0" width="7.0" height="4.0" transform="rotate(-35 425.3 120.0)"/>
<rect x="351.4" y="124.6" width="5.0" height="3.0" transform="rotate(-35 353.9 126.1)"/>
<rect x="389.2" y="124.3" width="5.0" height="6.0" transform="rotate(0 391.7 127.3)"/>
<rect x="467.4" y="69.4" width="5.0" height="3.0" transform="rotate(-30 469.9 70.9)"/>
<rect x="387.9" y="73.3" width="3.0" height="3.0" transform="rotate(35 389.4 74.8)"/>
<rect x="439.1" y="113.4" width="4.0" height="4.0" transform="rotate(40 441.1 115.4)"/>
<rect x="368.3" y="128.7" width="5.0" height="6.0" transform="rotate(-38 370.8 131.7)"/>
<rect x="487.4" y="104.6" width="5.0" height="6.0" transform="rotate(10 489.9 107.6)"/>
<rect x="473.0" y="122.0" width="5.0" height="3.0" transform="rotate(-38 475.5 123.5)"/>
<rect x="478.5" y="102.3" width="7.0" height="3.0" transform="rotate(10 482.0 103.8)"/>
<rect x="371.0" y="114.2" width="6.0" height="4.0" transform="rotate(30 374.0 116.2)"/>
<rect x="457.2" y="114.3" width="5.0" height="3.0" transform="rotate(10 459.7 115.8)"/>
<rect x="360.8" y="62.9" width="6.0" height="3.0" transform="rotate(-38 363.8 64.4)"/>
<rect x="441.0" y="76.0" width="3.0" height="4.0" transform="rotate(0 442.5 78.0)"/>
<rect x="368.5" y="69.6" width="4.0" height="4.0" transform="rotate(40 370.5 71.6)"/>
<rect x="441.1" y="66.9" width="7.0" height="4.0" transform="rotate(-35 444.6 68.9)"/>
<rect x="475.0" y="129.2" width="4.0" height="4.0" transform="rotate(35 477.0 131.2)"/>
<rect x="470.6" y="105.1" width="5.0" height="3.0" transform="rotate(30 473.1 106.6)"/>
<rect x="351.2" y="101.5" width="7.0" height="3.0" transform="rotate(0 354.7 103.0)"/>
<rect x="467.2" y="126.1" width="5.0" height="4.0" transform="rotate(-30 469.7 128.1)"/>
<rect x="378.2" y="66.8" width="4.0" height="3.0" transform="rotate(-30 380.2 68.3)"/>
<rect x="356.1" y="94.0" width="4.0" height="5.0" transform="rotate(-38 358.1 96.5)"/>
<rect x="374.4" y="126.5" width="5.0" height="3.0" transform="rotate(-35 376.9 128.0)"/>
<rect x="425.8" y="112.2" width="4.0" height="3.0" transform="rotate(-30 427.8 113.7)"/>
<rect x="462.0" y="84.7" width="7.0" height="4.0" transform="rotate(-30 465.5 86.7)"/>
<rect x="339.2" y="131.3" width="5.0" height="4.0" transform="rotate(-38 341.7 133.3)"/>
<rect x="451.0" y="110.9" width="4.0" height="4.0" transform="rotate(-30 453.0 112.9)"/>
<rect x="460.2" y="95.4" width="7.0" height="6.0" transform="rotate(10 463.7 98.4)"/>
<rect x="481.3" y="128.6" width="6.0" height="4.0" transform="rotate(-30 484.3 130.6)"/>
<rect x="403.5" y="121.9" width="7.0" height="5.0" transform="rotate(35 407.0 124.4)"/>
<rect x="452.2" y="103.3" width="6.0" height="6.0" transform="rotate(-35 455.2 106.3)"/>
<rect x="429.5" y="132.2" width="7.0" height="4.0" transform="rotate(0 433.0 134.2)"/>
<rect x="420.1" y="171.0" width="4.0" height="4.0" transform="rotate(30 422.1 173.0)"/>
<rect x="379.6" y="182.5" width="5.0" height="5.0" transform="rotate(-38 382.1 185.0)"/>
<rect x="405.6" y="144.7" width="4.0" height="3.0" transform="rotate(10 407.6 146.2)"/>
<rect x="419.7" y="201.8" width="4.0" height="3.0" transform="rotate(30 421.7 203.3)"/>
<rect x="451.8" y="138.8" width="7.0" height="3.0" transform="rotate(0 455.3 140.3)"/>
<rect x="412.7" y="161.0" width="7.0" height="5.0" transform="rotate(0 416.2 163.5)"/>
<rect x="407.1" y="172.9" width="5.0" height="5.0" transform="rotate(30 409.6 175.4)"/>
<rect x="416.2" y="134.7" width="7.0" height="3.0" transform="rotate(-35 419.7 136.2)"/>
<rect x="483.8" y="189.7" width="7.0" height="6.0" transform="rotate(35 487.3 192.7)"/>
<rect x="459.4" y="217.9" width="5.0" height="6.0" transform="rotate(0 461.9 220.9)"/>
<rect x="400.4" y="185.3" width="5.0" height="5.0" transform="rotate(40 402.9 187.8)"/>
<rect x="413.1" y="216.0" width="6.0" height="6.0" transform="rotate(0 416.1 219.0)"/>
<rect x="484.9" y="234.7" width="3.0" height="6.0" transform="rotate(10 486.4 237.7)"/>
<rect x="477.8" y="148.1" width="5.0" height="4.0" transform="rotate(35 480.3 150.1)"/>
<rect x="459.4" y="228.2" width="3.0" height="4.0" transform="rotate(10 460.9 230.2)"/>
<rect x="442.2" y="206.2" width="3.0" height="4.0" transform="rotate(-30 443.7 208.2)"/>
<rect x="404.3" y="229.3" width="4.0" height="5.0" transform="rotate(-38 406.3 231.8)"/>
<rect x="451.5" y="181.3" width="6.0" height="4.0" transform="rotate(35 454.5 183.3)"/>
<rect x="430.0" y="139.1" width="5.0" height="4.0" transform="rotate(-30 432.5 141.1)"/>
<rect x="377.0" y="172.6" width="5.0" height="3.0" transform="rotate(35 379.5 174.1)"/>
<rect x="480.2" y="207.6" width="5.0" height="4.0" transform="rotate(-30 482.7 209.6)"/>
<rect x="427.4" y="211.8" width="5.0" height="4.0" transform="rotate(-35 429.9 213.8)"/>
<rect x="427.2" y="147.3" width="5.0" height="4.0" transform="rotate(0 429.7 149.3)"/>
<rect x="406.9" y="151.8" width="7.0" height="5.0" transform="rotate(10 410.4 154.3)"/>
<rect x="419.7" y="142.7" width="5.0" height="4.0" transform="rotate(0 422.2 144.7)"/>
<rect x="433.6" y="170.1" width="6.0" height="3.0" transform="rotate(35 436.6 171.6)"/>
<rect x="424.4" y="133.5" width="5.0" height="6.0" transform="rotate(35 426.9 136.5)"/>
<rect x="402.9" y="163.4" width="3.0" height="5.0" transform="rotate(-35 404.4 165.9)"/>
<rect x="463.0" y="182.1" width="7.0" height="6.0" transform="rotate(40 466.5 185.1)"/>
<rect x="455.9" y="150.7" width="6.0" height="5.0" transform="rotate(0 458.9 153.2)"/>
<rect x="386.8" y="176.0" width="3.0" height="4.0" transform="rotate(-35 388.3 178.0)"/>
<rect x="451.0" y="206.9" width="5.0" height="3.0" transform="rotate(35 453.5 208.4)"/>
<rect x="399.1" y="149.4" width="4.0" height="3.0" transform="rotate(0 401.1 150.9)"/>
<rect x="445.2" y="167.4" width="3.0" height="5.0" transform="rotate(35 446.7 169.9)"/>
<rect x="379.1" y="136.5" width="5.0" height="3.0" transform="rotate(-35 381.6 138.0)"/>
<rect x="472.8" y="174.3" width="3.0" height="4.0" transform="rotate(-30 474.3 176.3)"/>
<rect x="424.0" y="196.4" width="5.0" height="5.0" transform="rotate(-38 426.5 198.9)"/>
<rect x="382.5" y="161.5" width="6.0" height="4.0" transform="rotate(40 385.5 163.5)"/>
<rect x="434.2" y="162.7" width="5.0" height="3.0" transform="rotate(35 436.7 164.2)"/>
<rect x="471.9" y="234.7" width="5.0" height="6.0" transform="rotate(-38 474.4 237.7)"/>
<rect x="468.9" y="167.5" width="4.0" height="3.0" transform="rotate(35 470.9 169.0)"/>
<rect x="457.9" y="207.3" width="5.0" height="4.0" transform="rotate(0 460.4 209.3)"/>
<rect x="491.0" y="235.1" width="5.0" height="4.0" transform="rotate(35 493.5 237.1)"/>
<rect x="385.3" y="189.7" width="6.0" height="6.0" transform="rotate(10 388.3 192.7)"/>
<rect x="382.1" y="154.5" width="7.0" height="3.0" transform="rotate(-35 385.6 156.0)"/>
<rect x="459.3" y="199.1" width="5.0" height="3.0" transform="rotate(30 461.8 200.6)"/>
<rect x="462.8" y="157.5" width="7.0" height="6.0" transform="rotate(35 466.3 160.5)"/>
<rect x="481.2" y="225.3" width="6.0" height="3.0" transform="rotate(-35 484.2 226.8)"/>
<rect x="411.7" y="185.1" width="7.0" height="6.0" transform="rotate(35 415.2 188.1)"/>
<rect x="437.5" y="211.7" width="5.0" height="6.0" transform="rotate(40 440.0 214.7)"/>
<rect x="375.4" y="155.2" width="4.0" height="4.0" transform="rotate(-38 377.4 157.2)"/>
<rect x="468.6" y="190.8" width="3.0" height="4.0" transform="rotate(-35 470.1 192.8)"/>
<rect x="478.4" y="194.7" width="3.0" height="4.0" transform="rotate(40 479.9 196.7)"/>
<rect x="385.2" y="146.8" width="5.0" height="4.0" transform="rotate(0 387.7 148.8)"/>
<rect x="396.0" y="165.5" width="3.0" height="3.0" transform="rotate(35 397.5 167.0)"/>
<rect x="441.9" y="181.6" width="3.0" height="3.0" transform="rotate(10 443.4 183.1)"/>
<rect x="436.8" y="190.6" width="7.0" height="6.0" transform="rotate(30 440.3 193.6)"/>
<rect x="393.9" y="133.6" width="5.0" height="3.0" transform="rotate(0 396.4 135.1)"/>
<rect x="483.0" y="214.1" width="5.0" height="4.0" transform="rotate(-38 485.5 216.1)"/>
<rect x="461.4" y="146.7" width="6.0" height="3.0" transform="rotate(-30 464.4 148.2)"/>
<rect x="448.6" y="143.4" width="5.0" height="5.0" transform="rotate(-35 451.1 145.9)"/>
<rect x="444.0" y="191.5" width="6.0" height="3.0" transform="rotate(30 447.0 193.0)"/>
<rect x="371.3" y="141.5" width="3.0" height="6.0" transform="rotate(30 372.8 144.5)"/>
<rect x="418.7" y="211.1" width="6.0" height="3.0" transform="rotate(-35 421.7 212.6)"/>
<rect x="423.9" y="222.7" width="4.0" height="4.0" transform="rotate(40 425.9 224.7)"/>
<rect x="410.3" y="235.1" width="3.0" height="4.0" transform="rotate(-38 411.8 237.1)"/>
<rect x="411.6" y="202.1" width="4.0" height="4.0" transform="rotate(-38 413.6 204.1)"/>
<rect x="433.4" y="146.3" width="7.0" height="4.0" transform="rotate(0 436.9 148.3)"/>
<rect x="488.0" y="144.9" width="4.0" height="3.0" transform="rotate(35 490.0 146.4)"/>
<rect x="457.6" y="188.3" width="3.0" height="3.0" transform="rotate(10 459.1 189.8)"/>
<rect x="443.9" y="154.1" width="6.0" height="4.0" transform="rotate(0 446.9 156.1)"/>
<rect x="488.3" y="220.3" width="4.0" height="4.0" transform="rotate(-30 490.3 222.3)"/>
<rect x="476.6" y="242.4" width="5.0" height="4.0" transform="rotate(40 479.1 244.4)"/>
<rect x="452.3" y="168.8" width="3.0" height="3.0" transform="rotate(-35 453.8 170.3)"/>
<rect x="397.7" y="141.2" width="3.0" height="4.0" transform="rotate(-30 399.2 143.2)"/>
<rect x="483.7" y="177.1" width="5.0" height="6.0" transform="rotate(-30 486.2 180.1)"/>
<rect x="415.9" y="179.4" width="6.0" height="4.0" transform="rotate(35 418.9 181.4)"/>
<rect x="475.1" y="139.4" width="6.0" height="4.0" transform="rotate(40 478.1 141.4)"/>
<rect x="428.5" y="155.1" width="4.0" height="4.0" transform="rotate(10 430.5 157.1)"/>
<rect x="399.7" y="176.5" width="3.0" height="3.0" transform="rotate(30 401.2 178.0)"/>
<rect x="468.9" y="213.6" width="3.0" height="3.0" transform="rotate(35 470.4 215.1)"/>
<rect x="485.2" y="162.6" width="5.0" height="4.0" transform="rotate(10 487.7 164.6)"/>
<rect x="452.1" y="160.5" width="4.0" height="3.0" transform="rotate(10 454.1 162.0)"/>
<rect x="424.2" y="161.7" width="7.0" height="4.0" transform="rotate(-38 427.7 163.7)"/>
<rect x="414.1" y="154.1" width="7.0" height="3.0" transform="rotate(-30 417.6 155.6)"/>
<rect x="487.2" y="151.4" width="4.0" height="5.0" transform="rotate(-30 489.2 153.9)"/>
<rect x="376.9" y="163.3" width="4.0" height="3.0" transform="rotate(10 378.9 164.8)"/>
<rect x="450.4" y="223.1" width="5.0" height="3.0" transform="rotate(10 452.9 224.6)"/>
<rect x="399.2" y="215.6" width="5.0" height="6.0" transform="rotate(40 401.7 218.6)"/>
<rect x="487.3" y="247.3" width="4.0" height="4.0" transform="rotate(40 489.3 249.3)"/>
<rect x="424.9" y="175.2" width="5.0" height="4.0" transform="rotate(40 427.4 177.2)"/>
<rect x="463.5" y="171.7" width="4.0" height="3.0" transform="rotate(-35 465.5 173.2)"/>
<rect x="466.6" y="225.1" width="4.0" height="5.0" transform="rotate(10 468.6 227.6)"/>
<rect x="428.1" y="188.8" width="3.0" height="3.0" transform="rotate(30 429.6 190.3)"/>
<rect x="431.8" y="198.2" width="4.0" height="6.0" transform="rotate(10 433.8 201.2)"/>
<rect x="417.2" y="193.4" width="4.0" height="6.0" transform="rotate(30 419.2 196.4)"/>
<rect x="472.5" y="219.7" width="6.0" height="4.0" transform="rotate(-38 475.5 221.7)"/>
<rect x="480.0" y="184.6" width="6.0" height="5.0" transform="rotate(30 483.0 187.1)"/>
<rect x="390.9" y="152.1" width="4.0" height="4.0" transform="rotate(40 392.9 154.1)"/>
<rect x="475.7" y="202.6" width="5.0" height="4.0" transform="rotate(10 478.2 204.6)"/>
<rect x="464.0" y="232.8" width="7.0" height="3.0" transform="rotate(40 467.5 234.3)"/>
<rect x="407.5" y="193.5" width="5.0" height="4.0" transform="rotate(10 410.0 195.5)"/>
<rect x="394.4" y="200.9" width="6.0" height="6.0" transform="rotate(-35 397.4 203.9)"/>
<rect x="426.8" y="204.3" width="3.0" height="6.0" transform="rotate(-30 428.3 207.3)"/>
<rect x="410.1" y="226.0" width="4.0" height="4.0" transform="rotate(-38 412.1 228.0)"/>
<rect x="486.5" y="197.4" width="4.0" height="5.0" transform="rotate(30 488.5 199.9)"/>
<rect x="401.2" y="199.1" width="4.0" height="3.0" transform="rotate(-30 403.2 200.6)"/>
<rect x="488.0" y="183.2" width="4.0" height="6.0" transform="rotate(0 490.0 186.2)"/>
<rect x="445.9" y="215.7" width="5.0" height="5.0" transform="rotate(-38 448.4 218.2)"/>
<rect x="465.0" y="203.0" width="5.0" height="3.0" transform="rotate(10 467.5 204.5)"/>
<rect x="458.5" y="318.8" width="5.0" height="3.0" transform="rotate(-38 461.0 320.3)"/>
<rect x="484.3" y="302.9" width="4.0" height="4.0" transform="rotate(-30 486.3 304.9)"/>
<rect x="463.0" y="240.8" width="6.0" height="3.0" transform="rotate(-38 466.0 242.3)"/>
<rect x="477.0" y="271.1" width="6.0" height="6.0" transform="rotate(30 480.0 274.1)"/>
<rect x="452.8" y="328.9" width="5.0" height="4.0" transform="rotate(10 455.3 330.9)"/>
<rect x="487.5" y="360.5" width="5.0" height="3.0" transform="rotate(40 490.0 362.0)"/>
<rect x="462.3" y="310.8" width="3.0" height="5.0" transform="rotate(40 463.8 313.3)"/>
<rect x="430.6" y="332.9" width="4.0" height="5.0" transform="rotate(40 432.6 335.4)"/>
<rect x="446.5" y="258.6" width="3.0" height="4.0" transform="rotate(-38 448.0 260.6)"/>
<rect x="455.3" y="282.7" width="3.0" height="3.0" transform="rotate(-30 456.8 284.2)"/>
<rect x="411.8" y="258.4" width="3.0" height="5.0" transform="rotate(0 413.3 260.9)"/>
<rect x="441.8" y="329.1" width="4.0" height="3.0" transform="rotate(10 443.8 330.6)"/>
<rect x="421.3" y="317.4" width="4.0" height="4.0" transform="rotate(30 423.3 319.4)"/>
<rect x="491.3" y="281.1" width="5.0" height="6.0" transform="rotate(35 493.8 284.1)"/>
</g>
<!-- streams -->
<g fill="none" stroke="#6a9de0" stroke-width="1.5" stroke-linejoin="round" stroke-linecap="round">
<path d="M37.5 37.5V78L39.5 78L45.4 107.6" stroke-width="1.3"/>
<path d="M83.9 0L84.4 16.8L88.9 29.6L91.8 49.4L93.8 69.1L96.8 78L106.6 95.8L120.5 120.5"/>
<path d="M118.5 30.6L123.4 47.4" stroke-width="1.2"/>
<path d="M0 90.8L12.8 126.4" stroke-width="1.4"/>
<path d="M142.3 0L147.7 22.7L151.2 39.5L150.7 43.4L174.4 63.2"/>
<rect x="148.7" y="23.2" width="4" height="4.4" stroke-width="1"/>
<path d="M190.2 0L192.6 17.8L181.3 23.7L195.1 37"/>
<path d="M219.8 0L221.3 5.9L205.5 14.3L225.7 42.5"/>
<path d="M233.1 52.3L241.5 63.2L250 56.3L264.8 50.4L270.7 54.3L278.6 40.5L301.3 22.7L306.8 29.1L323.6 9.9V3.9L328 0" stroke-width="1.5"/>
<path d="M125 51.3L128 59.2L135.9 78L142 95" stroke-width="1.4"/>
<path d="M369.5 25.2L354.7 40.5L348.7 30.1M354.7 40.5L333.9 57.3L327 64.2" stroke-width="1.4"/>
<path d="M55.3 159L62.2 183.6M28.6 171.8L36.5 193.5L62.2 184.1M3.9 188.6L7.9 197.5" stroke-width="1.5"/>
<path d="M124 132.300L130 154.200L156.400 145.100L150.400 122.500" stroke-width="1.300"/>
<path d="M356 137L380 180L392 201M401.5 262L400 285L414 311L437 352" stroke-width="0.9"/>
<path d="M452 368L494 350" stroke-width="0.9"/>
</g>
<!-- thin minor roads (residential) -->
<g fill="none" stroke="#dcd7b8" stroke-width="1.2" stroke-linecap="round">
<path d="M69 19L111 14L118 22L124 52"/>
<path d="M69 45L82 41M87 78L125 53.5"/>
<path d="M167.5 33.1L207 13L250 -10"/>
<path d="M163 0L164 18L167.5 33"/>
<path d="M348.7 0L299.4 64.2"/>
<path d="M471.8 12.8L436 12.5L406.6 41.5"/>
<path d="M396 0L403 10L388 24"/>
<path d="M379 30L388 24"/>
<path d="M380 104L372 116M394 113L389 122M404 112L399 120M378 135L386 150M369 146L374 158"/>
<path d="M402 165L470 100M415 165L450 125"/>
<path d="M398 245L420 228L440 215L470 240L494 262M420 228L455 270L494 300"/>
<path d="M400 287L445 240M417 313L480 250M437 345L494 285"/>
<path d="M420 165L494 200M440 175L425 200L405 215M460 180L440 215"/>
<path d="M392 175L410 165M400 190L430 170M470 120L494 140M455 135L494 165"/>
</g>
<!-- white minor roads -->
<g fill="none" stroke="#dcd7b8" stroke-linecap="round" stroke-linejoin="round">
<path d="M125 52.3L167.5 33.1L202 65.2" stroke-width="3.4"/>
<path d="M0 141.2L53.3 106.6V78" stroke-width="2.8"/>
<path d="M319.1 0L375 78L430.8 165" stroke-width="2.6"/>
<path d="M400.2 55L373.7 89.8" stroke-width="2.4"/>
<path d="M463.9 0L471.8 12.8L467.8 49.4L461.9 73.1" stroke-width="2.8"/>
<path d="M386.8 78L403.6 47.4" stroke-width="2.8"/>
<path d="M435 373L494 318" stroke-width="6"/>
<path d="M399.8 115L449.5 193" stroke-width="2.6"/><path d="M406.9 217.8L469 182.4L492 168.2" stroke-width="2.6"/><path d="M417.6 145.1L447.7 123.9" stroke-width="2.4"/><path d="M406.9 246.2L428.2 233.8L449.5 242.7L467.2 235.6" stroke-width="2.4"/><path d="M474.3 207.2L492 191.2M474.3 207.200L484.900 223.200" stroke-width="2.4"/><path d="M425 156L412 166M437 176L420 188M430 140L440 153M455 160L465 175" stroke-width="2.2"/>
</g>
<g fill="none" stroke="#fdfcf7" stroke-linecap="round" stroke-linejoin="round">
<path d="M125 52.3L167.5 33.1L202 65.2" stroke-width="2.4"/>
<path d="M0 141.2L53.3 106.6V78" stroke-width="1.8"/>
<path d="M319.1 0L375 78L430.8 165" stroke-width="1.6"/>
<path d="M400.2 55L373.7 89.8" stroke-width="1.4"/>
<path d="M463.9 0L471.8 12.8L467.8 49.4L461.9 73.1" stroke-width="1.8"/>
<path d="M386.8 78L403.6 47.4" stroke-width="1.8"/>
<path d="M435 373L494 318" stroke-width="5"/>
<path d="M399.8 115L449.5 193" stroke-width="1.5"/><path d="M406.9 217.8L469 182.4L492 168.2" stroke-width="1.5"/><path d="M417.6 145.1L447.7 123.9" stroke-width="1.3"/><path d="M406.9 246.2L428.2 233.8L449.5 242.7L467.2 235.6" stroke-width="1.3"/><path d="M474.3 207.2L492 191.2M474.300 207.200L484.900 223.200" stroke-width="1.3"/><path d="M425 156L412 166M437 176L420 188M430 140L440 153M455 160L465 175" stroke-width="1.1"/>
</g>
<!-- industrial white roads: casing -->
<g fill="none" stroke="#d6d0ac" stroke-linecap="round" stroke-linejoin="round">
<path d="M70 143L73.8 150L96 189.5L116 219L153 262L185 309L206 335L235 378" stroke-width="14.6"/>
<path d="M116 219L160 200L238 169L252 166" stroke-width="9.6"/>
<path d="M250 170L290 223L320 263L356 313L395 378" stroke-width="7"/>
<path d="M163 219.8L220.1 292.3L253 337L280 378" stroke-width="5.4"/>
<path d="M200 189L228.5 219.8L256 259L296 313L318 337L350 378" stroke-width="5.4"/>
<path d="M200 313L220.1 292.3L256 259L290 225" stroke-width="5.4"/>
<path d="M285 372L318 337L347.5 307.7" stroke-width="5.4"/>
<path d="M148 375L186 331L200 313" stroke-width="5.4"/>
<path d="M0 345L40 309L86 273L108 245L122 229" stroke-width="6.4"/>
<path d="M0 279L18 267L48 292" stroke-width="5"/>
<path d="M106 253L172 339" stroke-width="5"/>
<path d="M86 275L152 363" stroke-width="5"/>
<path d="M60 297L114 375" stroke-width="5"/>
<path d="M38 313L76 375" stroke-width="5"/>
<path d="M18 331L42 375" stroke-width="5"/>
</g>
<g fill="none" stroke="#fdfcf8" stroke-linecap="round" stroke-linejoin="round">
<path d="M70 143L73.8 150L96 189.5L116 219L153 262L185 309L206 335L235 378" stroke-width="13.4"/>
<path d="M116 219L160 200L238 169L252 166" stroke-width="8.4"/>
<path d="M250 170L290 223L320 263L356 313L395 378" stroke-width="5.8"/>
<path d="M163 219.8L220.1 292.3L253 337L280 378" stroke-width="4.2"/>
<path d="M200 189L228.5 219.8L256 259L296 313L318 337L350 378" stroke-width="4.2"/>
<path d="M200 313L220.1 292.3L256 259L290 225" stroke-width="4.2"/>
<path d="M285 372L318 337L347.5 307.7" stroke-width="4.2"/>
<path d="M148 375L186 331L200 313" stroke-width="4.2"/>
<path d="M0 345L40 309L86 273L108 245L122 229" stroke-width="5.2"/>
<path d="M0 279L18 267L48 292" stroke-width="3.8"/>
<path d="M106 253L172 339" stroke-width="3.8"/>
<path d="M86 275L152 363" stroke-width="3.8"/>
<path d="M60 297L114 375" stroke-width="3.8"/>
<path d="M38 313L76 375" stroke-width="3.8"/>
<path d="M18 331L42 375" stroke-width="3.8"/>
</g>
<!-- yellow roads: casing -->
<g fill="none" stroke="#bdb27a" stroke-linecap="butt" stroke-linejoin="round">
<path d="M64.2 -2V80L65.5 127L66 150" stroke-width="9" stroke="#e6e2d6"/>
<path d="M-8 190L30 166L65 149L125 126.5L166 111L190 98" stroke-width="13.6"/><path d="M180 104L200 92L220.500 65.200L247 -2" stroke-width="10.400"/>
<path d="M338 87L380.7 96.8L408.5 101.6L425.2 95.4L434 88" stroke-width="6.8"/>
<path d="M408.5 101.6L443.3 110.7" stroke-width="4.6"/>
<path d="M369.6 -2L408.5 55L432.2 87L443.3 110.7" stroke-width="6.2"/><path d="M440 104L443.300 110.700L482.300 165L497 186" stroke-width="4.600"/>
<path d="M436.4 85.6L460 75.2L472.6 82.8L480.9 94L496 90.5" stroke-width="5.8"/>
<path d="M467 -2L483.6 14.8L496 25" stroke-width="6.6"/>
<path d="M495 30L490 54.3L492 92" stroke-width="4.6"/>
</g>
<g fill="none" stroke="#f7f3bd" stroke-linecap="butt" stroke-linejoin="round">
<path d="M64.2 -2V80L65.5 127L66 150" stroke-width="4.2"/>
<path d="M-8 190L30 166L65 149L125 126.5L166 111L190 98" stroke-width="12.2"/><path d="M180 104L200 92L220.500 65.200L247 -2" stroke-width="9"/>
<path d="M338 87L380.7 96.8L408.5 101.6L425.2 95.4L434 88" stroke-width="5.4"/>
<path d="M408.5 101.6L443.3 110.7" stroke-width="3.4"/>
<path d="M369.6 -2L408.5 55L432.2 87L443.3 110.7" stroke-width="4.8"/><path d="M440 104L443.300 110.700L482.300 165L497 186" stroke-width="3.300"/>
<path d="M436.4 85.6L460 75.2L472.6 82.8L480.9 94L496 90.5" stroke-width="4.4"/>
<path d="M467 -2L483.6 14.8L496 25" stroke-width="5.2"/>
<path d="M495 30L490 54.3L492 92" stroke-width="3.4"/>
</g>
<!-- special buildings -->
<path d="M83.9 89.8L98.7 80L110.6 107.6L97.7 119.5L90.8 117.5L83.9 107.6Z" fill="#dadde8"/>
<path d="M340 108L348 101L356 106L353 116L345 121L340 117Z" fill="#dfe1ea"/>
<path d="M182 207L193 197L198 203L204 199L200 193L195 196" fill="none"/>
<path d="M181.5 208L190.5 200L194.5 204.5L185.5 213Z M191 199L199 192.5L205 199.5L197 206Z" fill="#d9dde8"/>
<path d="M100 266L105.5 262L111 272L104.5 280Z" fill="#d9dde8"/>
<path d="M140 130L146 125.500L153.400 131L150 137.600L143 137Z" fill="#d9dde8"/>
<path d="M69 305L77 299L85 311L77 319Z" fill="#d9dde8"/>
<rect x="96.3" y="44" width="7.4" height="7" fill="#e6b264" transform="rotate(-15 100 47.5)"/>
<rect x="157" y="50" width="19" height="4.4" fill="#e6b264" transform="rotate(40 166.5 52.2)"/>
<rect x="18" y="165" width="3" height="6" fill="#e9a23f" transform="rotate(-20 19.5 168)"/>
<rect x="0" y="138" width="2.5" height="5" fill="#e9a23f"/>
<!-- dashed boundaries -->
<g fill="none" stroke="#8d9fb3" stroke-width="0.6" stroke-dasharray="3 2">
<path d="M20 236L44 216L98 197L145 178L213 158"/>
<path d="M86 178L88 203"/>
<path d="M283 157L320 200L367 250L390 232"/>
<path d="M367 250L350 262"/>
</g>
<path d="M350 262L285 310L228 352" fill="none" stroke="#9fcf9f" stroke-width="0.6" stroke-dasharray="2 2"/>
<path d="M282 25L262 50L250 75" fill="none" stroke="#9fcf9f" stroke-width="0.6" stroke-dasharray="2 2"/>
<!-- labels -->
<g font-size="8.5" fill="#444" style="paint-order:stroke" stroke="#f7f3e6" stroke-width="1.6" stroke-linejoin="round">
<text x="48" y="91" font-size="10" fill="#333">MEGAドン・キホーテ</text>
<text x="255" y="50" font-size="9.5" fill="#333" textLength="118" lengthAdjust="spacingAndGlyphs">HOTEL R9 The Yardうるま</text>
<text x="212" y="7">ニューハイツ</text>
<text x="402" y="33" textLength="92" lengthAdjust="spacingAndGlyphs">住宅型有料老人ホーム川田</text>
<text x="37" y="176.5" textLength="67" lengthAdjust="spacingAndGlyphs">田場機工具志川(営)</text>
<text x="-2" y="206.500" font-size="9" fill="#222">かねひで</text>
<text x="121" y="143.500">シーランドうる</text>
<text x="121" y="221.5" textLength="133" lengthAdjust="spacingAndGlyphs">沖縄IT津梁パーク・中核機能支援施設</text>
<text x="61" y="265" textLength="83" lengthAdjust="spacingAndGlyphs">パン・アキモト沖縄工場</text>
<text x="46" y="303" textLength="62" lengthAdjust="spacingAndGlyphs">東京計装沖縄工場</text>
<text x="166" y="351" textLength="141" lengthAdjust="spacingAndGlyphs">トランスコスモスBPOセンター沖縄うるま</text>
<text x="353" y="161" textLength="52" lengthAdjust="spacingAndGlyphs">川田マンション</text>
<text x="452" y="171">知名商店</text>
<text x="338" y="128">がふ墓地</text>
<text x="0" y="41" fill="#777">原＿＿保育園</text>
<text x="0" y="75.500" fill="#555">場</text>
<text x="4" y="135" fill="#333" font-size="9">ゲオ</text>
</g>
<g font-weight="bold" fill="#4c7a50" style="paint-order:stroke" stroke="#f7f3e6" stroke-width="2" stroke-linejoin="round">
<text x="118" y="13" font-size="11">塩屋</text>
<text x="218" y="244" font-size="10.5">州崎</text>
<text x="390" y="198" font-size="10.5">川田</text>
<text x="386" y="230" font-size="11.5">勝連南風原</text>
</g>
<text x="383" y="319" font-size="11" fill="#fff" style="paint-order:stroke" stroke="#6f9bd8" stroke-width="1.6" stroke-linejoin="round">中城湾</text>
<g font-size="7.200" fill="#222" style="paint-order:stroke" stroke="#fff" stroke-opacity=".7" stroke-width="1.600" text-anchor="end">
<text x="487" y="355">©2022 ZENRIN DataCom</text>
<text x="487" y="363.5">地図データ©2022 ZENRIN</text>
</g>
<g fill="#333">
<circle cx="208.500" cy="4" r="1.200"/><circle cx="399.5" cy="30" r="1.2"/><circle cx="34" cy="173.5" r="1.2"/><circle cx="118.500" cy="140.500" r="1.200"/>
<circle cx="187.5" cy="210.5" r="1.1"/><circle cx="105.5" cy="271" r="1.1"/><circle cx="77" cy="309" r="1.1"/><circle cx="237" cy="340.5" r="1.1"/><circle cx="379" cy="169" r="1.1"/><circle cx="472" cy="159" r="1.1"/>
</g>
<!-- icons -->
<g>
<path d="M373.800 97.500l3.200-4.800h6.400l3.200 4.800l-3.200 4.800h-6.400z" fill="#3d7cc9"/><text x="380.200" y="100.300" font-size="7.800" font-weight="bold" fill="#fff" text-anchor="middle">33</text>
<rect x="428" y="88.4" width="12" height="5" rx="2.5" fill="#3d7cc9"/><circle cx="431" cy="90.9" r="1.1" fill="#fff"/><circle cx="434" cy="90.9" r="1.1" fill="#fff"/><circle cx="437" cy="90.9" r="1.1" fill="#fff"/>
<rect x="442.4" y="85" width="20.4" height="11.5" fill="#fff" stroke="#3d7cc9" stroke-width="1"/><text x="452.6" y="94.3" font-size="9.5" fill="#2c5fae" text-anchor="middle">川田</text>
<rect x="59.2" y="130.3" width="21.8" height="12" fill="#fff" stroke="#3d7cc9" stroke-width="1"/><text x="70.1" y="140" font-size="9.5" fill="#2c5fae" text-anchor="middle">豊原</text>
<rect x="64.2" y="144.3" width="12" height="5" rx="2.5" fill="#3d7cc9"/><circle cx="67.2" cy="146.8" r="1.1" fill="#fff"/><circle cx="70.2" cy="146.8" r="1.1" fill="#fff"/><circle cx="73.2" cy="146.8" r="1.1" fill="#fff"/>
<circle cx="209" cy="56" r="5.6" fill="#fff" stroke="#3d7cc9" stroke-width="1"/><path d="M205.5 60.5v-6.5q0-1.6 3.5-1.6t3.5 1.6v6.5M207.6 60.5v-5M210.4 60.5v-5" stroke="#3d6fc0" stroke-width="1.1" fill="none"/>
<circle cx="248" cy="46.5" r="3.4" fill="#6a2a8c"/><circle cx="248" cy="46.5" r="1.4" fill="#e8d8f2"/><path d="M243.5 40.5l3 3.5" stroke="#c9a6dc" stroke-width="2.4"/>
<circle cx="411.5" cy="50.4" r="3.2" fill="#f5f2e6" stroke="#444" stroke-width="0.9"/><path d="M409.3 48.2l4.4 4.4M413.7 48.2l-4.4 4.4" stroke="#444" stroke-width="0.8"/>
<path d="M92.3 96.5l2-1.5l2.2 1.2v5.8l-2.2 1.2l-2-1.4z" fill="#333"/><path d="M93.3 95.6q1-2 2.2 0" stroke="#333" stroke-width="0.7" fill="none"/>
<path d="M9.3 141.5l2-1.5l2.2 1.2v5.8l-2.2 1.2l-2-1.4z" fill="#333"/><path d="M10.3 140.6q1-2 2.2 0" stroke="#333" stroke-width="0.7" fill="none"/>
<path d="M37.5 143h6.4v2.5q0 3-3.2 3t-3.2-3z" fill="#333"/><path d="M44 144q2.4 0 1.2 2.4" stroke="#333" stroke-width="0.8" fill="none"/>
<path d="M343.800 115.500v-4h1.600v-2.400h1.800v2.400h1.600v4z" fill="none" stroke="#444" stroke-width="0.8"/>
</g>
<!-- nav controls -->
<g>
<circle cx="26.5" cy="26.5" r="18.8" fill="#fbfbf8" fill-opacity=".85" stroke="#8a8a8a" stroke-width="1"/>
<circle cx="26.5" cy="26.5" r="7.6" fill="#fdfdfb" stroke="#9a9a9a" stroke-width="0.8"/>
<path d="M26.5 11.5l3 3.6h-6zM26.5 41.5l3-3.6h-6zM11.5 26.5l3.6-3v6zM41.5 26.5l-3.600-3v6z" fill="#8a8a8a"/>
<path d="M26.500 20.800l2 2.400h-4zM26.500 32.200l2-2.400h-4zM20.800 26.500l2.400-2v4zM32.200 26.500l-2.400-2v4z" fill="#444"/>
<rect x="20.600" y="53.600" width="12" height="12" fill="#fff" stroke="#222" stroke-width="1.100"/><path d="M23.600 59.600h6M26.600 56.600v6" stroke="#222" stroke-width="1.200"/>
<g fill="#fff" stroke="#222" stroke-width="0.9">
<rect x="23.600" y="69.500" width="6" height="2.600"/><rect x="23.600" y="73.800" width="6" height="2.600"/>
<rect x="23.600" y="83.700" width="6" height="2.600"/><rect x="23.600" y="88.000" width="6" height="2.600"/><rect x="23.600" y="92.300" width="6" height="2.600"/><rect x="23.600" y="96.600" width="6" height="2.600"/><rect x="23.600" y="100.900" width="6" height="2.600"/><rect x="23.600" y="105.200" width="6" height="2.600"/><rect x="23.600" y="109.500" width="6" height="2.600"/><rect x="23.600" y="113.800" width="6" height="2.600"/><rect x="23.600" y="118.100" width="6" height="2.600"/><rect x="23.600" y="122.400" width="6" height="2.600"/>
<rect x="21.600" y="77.500" width="10" height="5" stroke-width="1"/>
</g>
<path d="M24 80h5.200" stroke="#222" stroke-width="1"/>
<rect x="20.600" y="125.800" width="12" height="12" fill="#fff" stroke="#222" stroke-width="1.100"/><path d="M23.600 131.800h6" stroke="#222" stroke-width="1.200"/>
<rect x="21.600" y="142.400" width="10.400" height="6" fill="#fff" stroke="#222" stroke-width="1"/><path d="M26.800 143.800l2.600 3.200h-5.200z" fill="#222"/>
</g>
</svg>

<svg class="abs" style="left:236px;top:150px" width="40" height="40" viewBox="236 150 40 40"><path d="M247.500 185.800C245.500 180.500 238.200 174.500 238.200 167.800A9.300 9.300 0 0 1 256.800 167.800C256.800 174.500 249.500 180.500 247.500 185.800Z" fill="#d0264b"/><circle cx="247" cy="168" r="3" fill="#fff"/><path d="M255.500 156.500L271 156.500L249 169.200Z" fill="#fff"/><path d="M255.200 157.400L249 169.200L271.200 157.400" fill="none" stroke="#999" stroke-opacity=".5" stroke-width=".8"/></svg>
<div id="pop">
<div class="h" style="top:13.6px">ユーザー名</div><div class="v" style="top:13.6px">組織ドライバー2</div>
<div class="h" style="top:29.6px">車名</div><div class="v" style="top:28.6px;height:17px">スパイク</div>
<div class="h" style="top:45.6px">郵便番号</div><div class="v" style="top:44.6px;height:17px">904-2231</div>
<div class="h" style="top:61.6px">住所</div><div class="v" style="top:60.6px;height:17px;letter-spacing:-1.2px">沖縄県うるま市塩屋−４９１</div>
</div>

</div>
</div>
<div id="strack"></div>
<div id="sbar"></div>
<div class="abs" style="left:1271px;top:44px;width:0;height:0;border-left:3.5px solid transparent;border-right:3.5px solid transparent;border-bottom:3.500px solid #8c8c8c"></div>
<div class="abs" style="left:1271px;top:782px;width:0;height:0;border-left:3.5px solid transparent;border-right:3.5px solid transparent;border-top:3.500px solid #8c8c8c"></div>
<div id="foot">© 2016 Tokio Marine &amp; Nichido Fire Insurance Co., Ltd.(v3.2.1)</div>
</body>
</html>
